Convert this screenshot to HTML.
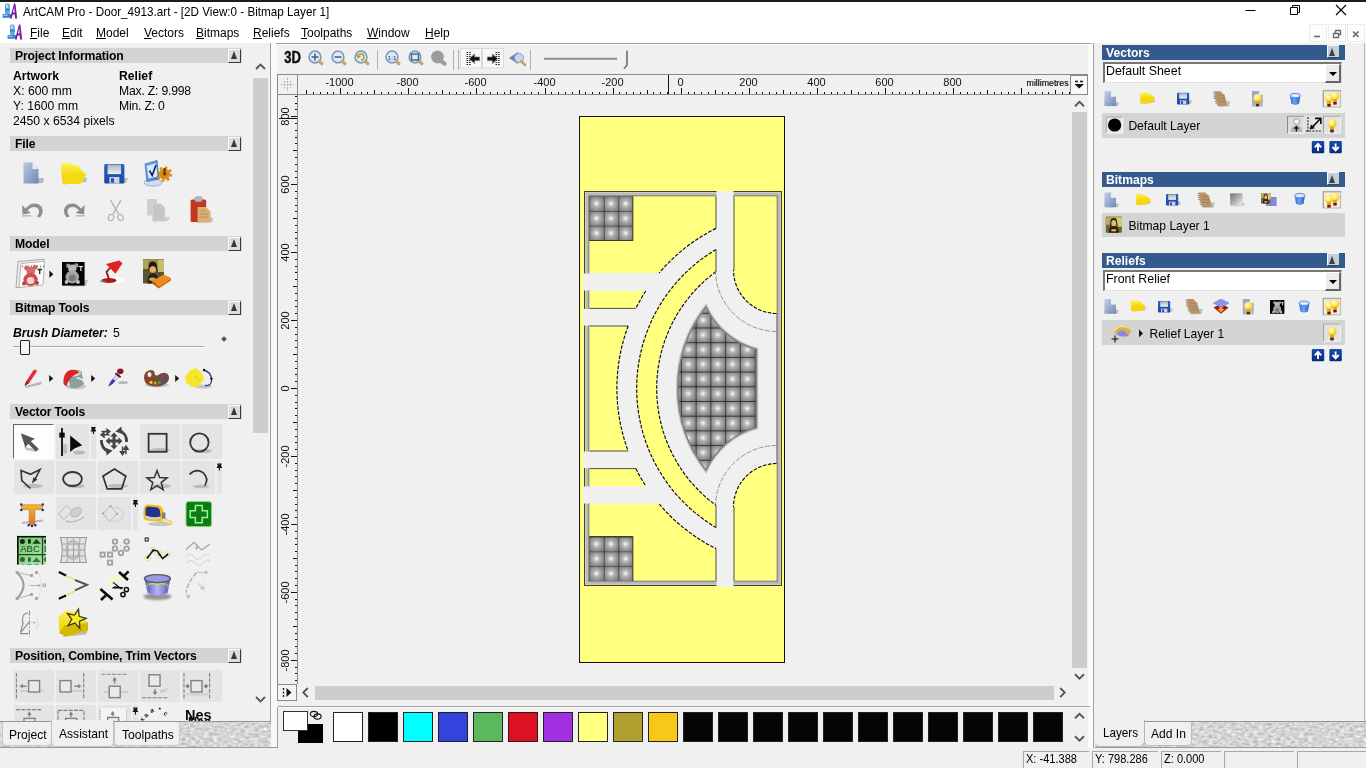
<!DOCTYPE html>
<html><head><meta charset="utf-8"><title>ArtCAM Pro</title>
<style>
*{box-sizing:border-box;margin:0;padding:0}
html,body{width:1366px;height:768px;overflow:hidden;background:#f0f0f0;font-family:"Liberation Sans",sans-serif;font-size:12px;color:#000}
body{position:relative}
.abs{position:absolute}
#topline{position:absolute;left:0;top:0;width:1366px;height:2px;background:#1c1c1c}
#titlebar{position:absolute;left:0;top:2px;width:1366px;height:41px;background:#fff}
.ttl{position:absolute;left:22.5px;top:2px;font-size:12.8px;white-space:nowrap;color:#000;transform:scaleX(0.913);transform-origin:0 50%}
.mi{position:absolute;top:23.5px;font-size:12.7px;white-space:nowrap;color:#000;transform:scaleX(0.945);transform-origin:0 50%}
.mi u{text-decoration:underline;text-underline-offset:1px}
.hdr{position:absolute;left:10px;width:232px;height:15px;background:#d3d3d3;font-weight:bold;font-size:12.2px;line-height:15px;padding-left:5px;white-space:nowrap;letter-spacing:-0.17px}
.hdr .cb{position:absolute;right:1px;top:0.5px;width:13.5px;height:14px;background:#dcdcdc;border-right:1px solid #3a3a3a;border-bottom:1px solid #3a3a3a;border-left:1px solid #fafafa;border-top:1px solid #fafafa}
.hdr .cb:after{content:"";position:absolute;left:2px;top:1.8px;border-left:3.7px solid transparent;border-right:3.7px solid transparent;border-bottom:8px solid #3a3a3a}
.bh{position:absolute;left:1102px;width:243px;height:15px;background:#325a8c;color:#fff;font-weight:bold;font-size:12.7px;line-height:15px;padding-left:4px;white-space:nowrap}
.bh .bt{position:relative;top:0.8px;display:inline-block;transform:scaleX(0.955);transform-origin:0 50%}
.bh .cb{position:absolute;right:6px;top:0.4px;width:12.2px;height:12.8px;background:#c6ceda;border-left:1px solid #f2f6fa;border-top:1px solid #f2f6fa;border-bottom:1px solid #3a4656}
.bh .cb:after{content:"";position:absolute;left:1.6px;top:1.6px;border-left:3.6px solid transparent;border-right:3.6px solid transparent;border-bottom:8px solid #38423e}
.t{position:absolute;white-space:nowrap}
.ic{position:absolute;overflow:visible}
.cell{position:absolute;background:#e4e4e4}
.sw{position:absolute;top:712px;width:30px;height:30px;border:1px solid #222}
.combo{position:absolute;left:1103px;width:239px;height:21px;background:#fff;border-top:2px solid #777;border-left:2px solid #777;border-bottom:1px solid #e0e0e0;border-right:1px solid #e0e0e0;font-size:12.4px;line-height:15px;padding-left:1px}
.combo .db{position:absolute;right:0;top:0;width:16px;height:19px;background:#ececec;border-right:2px solid #666;border-bottom:2px solid #666;border-left:1px solid #fff;border-top:1px solid #fff}
.combo .db:after{content:"";position:absolute;left:3px;top:7px;border-left:4px solid transparent;border-right:4px solid transparent;border-top:4px solid #000}
.lrow{position:absolute;left:1102px;width:243px;height:25px;background:#d4d4d4;font-size:12.1px}
.sx{display:inline-block;transform-origin:0 50%}
.tex{background:#d9d9d9}
.ud{position:absolute;width:12px;height:12px;background:#12409a;border-radius:1px}
.tab{position:absolute;font-size:13px;white-space:nowrap}
.sb{position:absolute;top:751px;height:17px;border-left:1px solid #a8a8a8;border-top:1px solid #a8a8a8;font-size:12px;line-height:15.5px;padding-left:1.5px;white-space:nowrap}

#root{position:absolute;left:0;top:0;width:1366px;height:768px;will-change:transform}

</style></head>
<body>
<div id="root">
<div id="topline"></div>
<div id="titlebar">
<svg class="ic" style="left:2px;top:1px" width="16" height="16" viewBox="0 0 16 16"><rect x="3" y="0.6" width="4.8" height="10.6" rx="1.6" fill="#5ea8e8"/><rect x="4" y="1.6" width="2.2" height="3.4" rx="1" fill="#b8e0f8"/><rect x="3" y="5.6" width="4.8" height="2.2" fill="#3e86d2"/><rect x="0.6" y="11" width="9" height="3.8" fill="#3a82d0"/><rect x="1.6" y="11.8" width="4" height="1.2" fill="#9ccaf0"/><path d="M8 15.6L12 0.4L13.4 0.4L15.2 15.6L13 15.6L12.7 11.6L10.6 11.6L9.8 15.6Z" fill="#7c1c9e"/><path d="M11 9.6L12.2 4L12.6 9.6Z" fill="#fff"/></svg>
<div class="ttl">ArtCAM Pro - Door_4913.art - [2D View:0 - Bitmap Layer 1]</div>
<svg class="ic" style="left:1240px;top:0" width="120" height="22" viewBox="0 0 120 22"><path d="M5.5 8.5H15.5" stroke="#000" stroke-width="1" fill="none"/><path d="M50.5 5.5H57.5V12.5H50.5Z M52.5 5.5V3.5H59.5V10.5H57.5" stroke="#000" stroke-width="1" fill="none"/><path d="M96 3L106 13M106 3L96 13" stroke="#000" stroke-width="1.1" fill="none"/></svg>
<svg class="ic" style="left:7px;top:22px" width="16" height="16" viewBox="0 0 16 16"><rect x="3" y="0.6" width="4.8" height="10.6" rx="1.6" fill="#5ea8e8"/><rect x="4" y="1.6" width="2.2" height="3.4" rx="1" fill="#b8e0f8"/><rect x="3" y="5.6" width="4.8" height="2.2" fill="#3e86d2"/><rect x="0.6" y="11" width="9" height="3.8" fill="#3a82d0"/><rect x="1.6" y="11.8" width="4" height="1.2" fill="#9ccaf0"/><path d="M8 15.6L12 0.4L13.4 0.4L15.2 15.6L13 15.6L12.7 11.6L10.6 11.6L9.8 15.6Z" fill="#7c1c9e"/><path d="M11 9.6L12.2 4L12.6 9.6Z" fill="#fff"/></svg>
<div class="mi" style="left:30px"><u>F</u>ile</div>
<div class="mi" style="left:62px"><u>E</u>dit</div>
<div class="mi" style="left:96px"><u>M</u>odel</div>
<div class="mi" style="left:144px"><u>V</u>ectors</div>
<div class="mi" style="left:196px"><u>B</u>itmaps</div>
<div class="mi" style="left:253px"><u>R</u>eliefs</div>
<div class="mi" style="left:301px"><u>T</u>oolpaths</div>
<div class="mi" style="left:367px"><u>W</u>indow</div>
<div class="mi" style="left:425px"><u>H</u>elp</div>
<div class="abs" style="left:1309px;top:22px;width:18px;height:18px;border:1px solid #ececec;background:#fdfdfd"></div>
<div class="abs" style="left:1328px;top:22px;width:18px;height:18px;border:1px solid #ececec;background:#fdfdfd"></div>
<div class="abs" style="left:1347px;top:22px;width:18px;height:18px;border:1px solid #ececec;background:#fdfdfd"></div>
<svg class="ic" style="left:1309px;top:22px" width="57" height="18" viewBox="0 0 57 18"><path d="M5 12.5H11" stroke="#6a6a6a" stroke-width="1.6"/><path d="M24.5 9.5H29.5V13.5H24.5Z M26.5 9V6.5H31.5V10.5H30" stroke="#6a6a6a" stroke-width="1.3" fill="none"/><path d="M44 7.5L49.5 13M49.5 7.5L44 13" stroke="#6a6a6a" stroke-width="1.7"/></svg>

</div>
<div class="abs" id="leftp" style="left:0;top:43px;width:270px;height:678px;overflow:hidden">
<div class="abs" style="left:0;top:-43px;width:270px;height:768px">
<div class="hdr" style="top:48px"><span style="position:relative;top:0.8px">Project Information</span><span class="cb"></span></div>
<div class="t" style="left:13px;top:68.8px;font-weight:bold;font-size:12.2px">Artwork</div>
<div class="t" style="left:119px;top:68.8px;font-weight:bold;font-size:12.2px">Relief</div>
<div class="t" style="left:13px;top:83.8px;font-size:12.2px">X: 600 mm</div>
<div class="t" style="left:119px;top:83.8px;font-size:12.2px;letter-spacing:-0.2px">Max. Z: 9.998</div>
<div class="t" style="left:13px;top:98.8px;font-size:12.2px">Y: 1600 mm</div>
<div class="t" style="left:119px;top:98.8px;font-size:12.2px;letter-spacing:-0.2px">Min. Z: 0</div>
<div class="t" style="left:13px;top:113.8px;font-size:12.2px">2450 x 6534 pixels</div>
<div class="hdr" style="top:136px"><span style="position:relative;top:0.8px">File</span><span class="cb"></span></div>
<div class="hdr" style="top:236px"><span style="position:relative;top:0.8px">Model</span><span class="cb"></span></div>
<div class="hdr" style="top:300px"><span style="position:relative;top:0.8px">Bitmap Tools</span><span class="cb"></span></div>
<div class="t" style="left:13px;top:325.8px;font-size:12.2px;font-weight:bold;font-style:italic">Brush Diameter:</div>
<div class="t" style="left:113px;top:325.8px;font-size:12.2px">5</div>
<div class="abs" style="left:13px;top:346px;width:191px;height:1px;background:#a8a8a8"></div>
<div class="abs" style="left:13px;top:347px;width:191px;height:1px;background:#fdfdfd"></div>
<div class="abs" style="left:20px;top:340px;width:10px;height:15px;background:#f4f4f4;border:1px solid #222;border-radius:1px"></div>
<div class="abs" style="left:222px;top:337px;width:4px;height:4px;background:#3a5a78;transform:rotate(45deg)"></div>
<div class="hdr" style="top:404px"><span style="position:relative;top:0.8px">Vector Tools</span><span class="cb"></span></div>
<div class="hdr" style="top:648px"><span style="position:relative;top:0.8px">Position, Combine, Trim Vectors</span><span class="cb"></span></div>
<div class="cell" style="left:55.7px;top:424.4px;width:33px;height:34.2px"></div>
<div class="cell" style="left:91px;top:424.4px;width:4.8px;height:34.2px"></div>
<div class="cell" style="left:140px;top:424.4px;width:40px;height:34.2px"></div>
<div class="cell" style="left:181.6px;top:424.4px;width:40px;height:34.2px"></div>
<div class="cell" style="left:13.5px;top:460.6px;width:40.5px;height:33.6px"></div>
<div class="cell" style="left:55.7px;top:460.6px;width:40.5px;height:33.6px"></div>
<div class="cell" style="left:97.5px;top:460.6px;width:40.5px;height:33.6px"></div>
<div class="cell" style="left:140px;top:460.6px;width:40.5px;height:33.6px"></div>
<div class="cell" style="left:181.6px;top:460.6px;width:33px;height:33.6px"></div>
<div class="cell" style="left:217px;top:460.6px;width:4.8px;height:33.6px"></div>
<div class="cell" style="left:56px;top:497.4px;width:39.8px;height:33px"></div>
<div class="cell" style="left:98.2px;top:497.4px;width:33px;height:33px"></div>
<div class="cell" style="left:133px;top:497.4px;width:4.8px;height:33px"></div>
<div class="cell" style="left:14px;top:669.5px;width:40px;height:32.3px"></div>
<div class="cell" style="left:56px;top:669.5px;width:40px;height:32.3px"></div>
<div class="cell" style="left:98px;top:669.5px;width:40px;height:32.3px"></div>
<div class="cell" style="left:140px;top:669.5px;width:40px;height:32.3px"></div>
<div class="cell" style="left:182px;top:669.5px;width:40px;height:32.3px"></div>
<div class="cell" style="left:14px;top:705.2px;width:40px;height:20px"></div>
<div class="cell" style="left:56px;top:705.2px;width:40px;height:20px"></div>
<div class="cell" style="left:98px;top:705.2px;width:33px;height:20px"></div>
<div class="cell" style="left:133px;top:705.2px;width:4.8px;height:20px"></div>
<div class="abs" style="left:13px;top:424px;width:41px;height:35px;background:#fdfdfd;border-top:1px solid #666;border-left:1px solid #666;border-right:1px solid #fff;border-bottom:1px solid #fff"></div>
<svg class="abs" style="left:0;top:0" width="270" height="768" viewBox="0 0 270 768">
<defs>
<filter id="blur1" x="-30%" y="-30%" width="160%" height="160%"><feGaussianBlur stdDeviation="0.9"/></filter>
<filter id="blur05" x="-30%" y="-30%" width="160%" height="160%"><feGaussianBlur stdDeviation="0.5"/></filter>
<linearGradient id="gpage" x1="0" y1="0" x2="1" y2="1"><stop offset="0" stop-color="#b9c9e3"/><stop offset="0.6" stop-color="#8fa3c6"/><stop offset="1" stop-color="#6d84ad"/></linearGradient>
<linearGradient id="gfold" x1="0" y1="0" x2="0" y2="1"><stop offset="0" stop-color="#fff24a"/><stop offset="1" stop-color="#e6c800"/></linearGradient>
<linearGradient id="gsave" x1="0" y1="0" x2="0" y2="1"><stop offset="0" stop-color="#2a62c8"/><stop offset="1" stop-color="#1a48a0"/></linearGradient>
<linearGradient id="glab" x1="0" y1="0" x2="0" y2="1"><stop offset="0" stop-color="#aeb4bc"/><stop offset="1" stop-color="#eef0f2"/></linearGradient>
<linearGradient id="gmon" x1="0" y1="0" x2="1" y2="1"><stop offset="0" stop-color="#7ab6f0"/><stop offset="1" stop-color="#3c78d0"/></linearGradient>
<linearGradient id="gcyl" x1="0" y1="0" x2="1" y2="0"><stop offset="0" stop-color="#5a5ac8"/><stop offset="0.5" stop-color="#b4b4f4"/><stop offset="1" stop-color="#5a5ac8"/></linearGradient>
<linearGradient id="gora" x1="0" y1="0" x2="0" y2="1"><stop offset="0" stop-color="#f6b23c"/><stop offset="1" stop-color="#d97a10"/></linearGradient>
</defs>
<path d="M28 183L43 183L44 178L38 178Z" fill="#8a8a8a" opacity="0.55" filter="url(#blur05)"/>
<path d="M23.5 162.5H32.5L38.5 169V183.5H23.5Z" fill="url(#gpage)"/><path d="M32.5 162.5V169H38.5Z" fill="#e8eef8"/>
<path d="M66 184L86 182L87 178L70 178Z" fill="#8a8a8a" opacity="0.5" filter="url(#blur05)"/>
<path d="M61 166Q61 163.5 63.5 163.5L70 162.8L73 165.2L78 165.5Q80 166 80 168.5L84.5 173.5Q87 174 85.5 176L82 182Q81 183.5 78 183.6L64 184.2Q62.3 184 62.3 182Z" fill="url(#gfold)"/><path d="M62.3 182L66.5 174Q67.5 172.5 70 172.5L84.5 173.5Q86.5 174 85.5 176L82 182Q81 183.5 78 183.6L64 184.2Q62.3 184 62.3 182Z" fill="#f4dc10"/>
<path d="M110 184L126 183L128 178L118 178Z" fill="#8a8a8a" opacity="0.5" filter="url(#blur05)"/>
<rect x="104.2" y="164" width="20.2" height="19.6" rx="1.5" fill="url(#gsave)"/><rect x="107.6" y="164.6" width="13.4" height="9.5" fill="url(#glab)"/><rect x="109.4" y="177" width="10" height="6.6" fill="#c9d2de"/><rect x="111" y="178.2" width="3" height="4.6" fill="#2a55aa"/>
<ellipse cx="153" cy="182.5" rx="9" ry="3.6" fill="#d6dcf0" stroke="#8c9ac8" stroke-width="0.8"/>
<path d="M145 164L157 160.5L159 179L147 181.5Z" fill="url(#gmon)" stroke="#4a6fb8" stroke-width="0.8"/><path d="M147 166L156 163.3L157.5 176.5L148.6 178.6Z" fill="#d8ecff"/><path d="M149.5 170.5L152.2 175.5L156 165" fill="none" stroke="#16226a" stroke-width="1.7"/>
<circle cx="164.5" cy="174" r="5.6" fill="#d98c14"/><circle cx="164.5" cy="174" r="6.6" fill="none" stroke="#d98c14" stroke-width="2.4" stroke-dasharray="2.6 2.6"/><circle cx="164.5" cy="174" r="1.8" fill="#7a4c08"/><rect x="163.6" y="168" width="2" height="6" fill="#5a3a08"/>
<path d="M22 205L22.5 214.5L31 213L27.6 210.5Q32 205 37.5 208Q41 211 37 216.5L40 217.5Q46 209 39 204.5Q31.5 201 25.5 208.5Z" fill="#8e8e8e"/><rect x="22" y="215" width="9" height="1.6" fill="#bcbcbc"/>
<path d="M84.6 205L84.1 214.5L75.6 213L79 210.5Q74.6 205 69.1 208Q65.6 211 69.6 216.5L66.6 217.5Q60.6 209 67.6 204.5Q75.1 201 81.1 208.5Z" fill="#8e8e8e"/><rect x="75.6" y="215" width="9" height="1.6" fill="#bcbcbc"/>
<path d="M110.5 200L118.5 214M121 200L113 214" stroke="#b4b4b4" stroke-width="1.5" fill="none"/><ellipse cx="111" cy="217.5" rx="2.6" ry="3.2" transform="rotate(30 111 217.5)" fill="none" stroke="#b4b4b4" stroke-width="1.2"/><ellipse cx="120.5" cy="217.5" rx="2.6" ry="3.2" transform="rotate(-30 120.5 217.5)" fill="none" stroke="#b4b4b4" stroke-width="1.2"/>
<path d="M152 222L168 221L170 217L160 217Z" fill="#9a9a9a" opacity="0.4" filter="url(#blur05)"/><path d="M147 199H157V215.5H147Z" fill="#cfcfcf"/><path d="M152.5 203.5H161L165 208V221H152.5Z" fill="#c6c6c6" stroke="#dadada" stroke-width="0.6"/>
<path d="M196 223L212 222L213.5 218L203 218Z" fill="#8a8a8a" opacity="0.45" filter="url(#blur05)"/><rect x="190.6" y="199.5" width="15.6" height="22.4" rx="1.5" fill="#c0391f"/><rect x="195" y="196.8" width="7" height="5" rx="1.4" fill="#b9b9c4" stroke="#8c8c98" stroke-width="0.6"/><path d="M197.6 207H206L210.6 211.5V222.5H197.6Z" fill="#dcae78"/><path d="M199.6 211H205M199.6 214H208M199.6 217H208" stroke="#b98a55" stroke-width="0.8"/>
<path d="M18 261.5L44 259.2L42.5 284.5L16 287.6Z" fill="#e9e9e9" stroke="#9a9a9a" stroke-width="0.8"/><path d="M21 263.5L44.6 261.2L43 285L19 287.6Z" fill="#fdfdfd" stroke="#a8a8a8" stroke-width="0.8"/><path d="M22 266.5H44" stroke="#999" stroke-width="2.4" stroke-dasharray="1 2"/>
<circle cx="26.5" cy="268" r="2.3" fill="#d45a5a"/><circle cx="35" cy="267.3" r="2.3" fill="#d45a5a"/><circle cx="30.8" cy="271" r="4.4" fill="#dd6a6a"/><ellipse cx="30.6" cy="279.5" rx="7.2" ry="6.5" fill="#cf4a4a"/><ellipse cx="30.6" cy="280.5" rx="3.8" ry="3.6" fill="#f6d4d4"/><circle cx="24" cy="283.5" r="2" fill="#c43c3c"/><circle cx="37" cy="283" r="2" fill="#c43c3c"/><path d="M37.5 269.5H42M39.7 269.5V274" stroke="#222" stroke-width="1.3"/>
<path d="M49.4 270.59999999999997V277.8L53.4 274.2Z" fill="#111"/>
<path d="M70 287L86 286L88 280L80 280Z" fill="#8a8a8a" opacity="0.45" filter="url(#blur05)"/><rect x="62" y="262" width="22.6" height="23.6" fill="#050505"/>
<circle cx="68.3" cy="265.8" r="2.2" fill="#9c9c9c"/><circle cx="76.3" cy="265.5" r="2.2" fill="#9c9c9c"/><circle cx="72.3" cy="268.8" r="4.2" fill="#b8b8b8"/><ellipse cx="72.3" cy="277" rx="6.8" ry="6.4" fill="#a4a4a4"/><ellipse cx="72.3" cy="278" rx="3.4" ry="3.3" fill="#7a7a7a"/><circle cx="66.5" cy="282" r="1.9" fill="#c4c4c4"/><circle cx="78" cy="282" r="1.9" fill="#c4c4c4"/><path d="M78.8 266.5H83M80.9 266.5V271" stroke="#eee" stroke-width="1.2"/>
<ellipse cx="113" cy="280" rx="11" ry="3.4" fill="#fff" opacity="0.9"/><ellipse cx="109" cy="280.5" rx="7.5" ry="2.6" fill="#b01818"/><ellipse cx="102.5" cy="281.3" rx="3" ry="1.2" fill="#777" opacity="0.5"/><path d="M109 279L106.5 272L111 267" fill="none" stroke="#8a1010" stroke-width="1.8"/><path d="M106 264L119.5 260.6L122.5 263.5L115.5 273.8Z" fill="#e02222"/><path d="M115.5 273.8L122.5 263.5L121 270Z" fill="#f8e8d0"/>
<rect x="143" y="259" width="21" height="24.5" fill="#5e5630"/><rect x="143" y="259" width="21" height="10" fill="#9a9054"/><rect x="158" y="260" width="6" height="12" fill="#c8be70"/><rect x="143" y="260" width="5" height="9" fill="#aea25e"/><ellipse cx="152.8" cy="268.5" rx="3.4" ry="4.3" fill="#e2b070"/><path d="M147.4 283.5Q147 273.5 152.8 273Q159 273.5 158.8 283.5Z" fill="#2e2414"/><path d="M148.8 266Q149 261.6 153 261.6Q157 262 156.8 266.5L157.6 272L155.8 268Q153 264 149.6 268L148.2 272Z" fill="#231808"/><ellipse cx="152.5" cy="279.3" rx="3.4" ry="1.7" fill="#d4a268"/>
<path d="M152 281L164 274.6L171 278L159 286Z" fill="#f08a1a"/><path d="M152 281L159 286V288.6L152 283.4Z" fill="#b85e0a"/><path d="M159 286L171 278V280.4L159 288.6Z" fill="#d8720e"/>
<path d="M25 386L42 381.6L41 384.6L26 388Z" fill="#8a8a8a" opacity="0.55" filter="url(#blur05)"/><path d="M24.5 386L26.3 381L34 369.5L37 371.3L29.2 383Z" fill="#e02a3a"/><path d="M24.5 386L26.3 381L29.2 383Z" fill="#7a2a2a"/><path d="M35 369.3L37.4 370.8" stroke="#f48a94" stroke-width="1"/>
<path d="M49.2 374.9V382.1L53.2 378.5Z" fill="#111"/>
<ellipse cx="76" cy="386.5" rx="10" ry="3" fill="#8a8a8a" opacity="0.4" filter="url(#blur05)"/><path d="M67.5 374.5L81.6 372.5L84 384Q78 389.5 70.4 387.5Z" fill="#8aa09a"/><ellipse cx="74.5" cy="373.8" rx="7.2" ry="3.2" transform="rotate(-8 74.5 373.8)" fill="#d8e0dc" stroke="#6e807a" stroke-width="0.7"/><path d="M63.5 384Q62.5 373 70 370Q77 368.5 79.5 373Q74 374 70.5 378.5Q68 381 66.5 386.5Z" fill="#d62626"/><path d="M76.5 378Q82 378 83.5 382" fill="none" stroke="#e8eeec" stroke-width="1.4"/>
<path d="M91.2 374.9V382.1L95.2 378.5Z" fill="#111"/>
<ellipse cx="123" cy="382.5" rx="5" ry="1.6" fill="#8a8a8a" opacity="0.55" filter="url(#blur05)"/><path d="M108.6 386.2L110.8 381.6L117.5 373.4L119.8 375.2L113 383.5Z" fill="#dfe4f2" stroke="#6a6a8a" stroke-width="0.6"/><path d="M108.6 386.2L110.8 381.6L113 383.5Z" fill="#2a3cc0"/><path d="M110.6 381.8L113 379L115.2 380.8L112.8 383.6Z" fill="#2a3cc0"/><path d="M115.4 373.2L120.6 377.2" stroke="#4a1a22" stroke-width="1.8"/><ellipse cx="120.3" cy="371.2" rx="3.2" ry="2.8" fill="#8a1a2a"/>
<ellipse cx="157" cy="385" rx="12" ry="2.6" fill="#8a8a8a" opacity="0.4" filter="url(#blur05)"/><path d="M144 378.5Q143.5 371 150.5 370Q154.5 370 154.5 373Q154.5 376 157.5 375.5Q162 371.5 167 373.5Q170.5 376.5 168 381.5Q163 387.5 153 386.3Q145 385.5 144 378.5Z" fill="#7a4a34"/><ellipse cx="149.5" cy="374.5" rx="2" ry="2.6" fill="#efefef"/><circle cx="147.6" cy="380" r="1.5" fill="#d42020"/><circle cx="151" cy="382.3" r="1.5" fill="#f2e020"/><circle cx="155.2" cy="383" r="1.5" fill="#e8a020"/><circle cx="159.2" cy="382.6" r="1.5" fill="#28b040"/><circle cx="162.8" cy="380.8" r="1.5" fill="#2a50e0"/><circle cx="165.5" cy="378" r="1.5" fill="#2a50e0"/>
<path d="M175.2 374.9V382.1L179.2 378.5Z" fill="#111"/>
<ellipse cx="203" cy="386.6" rx="9" ry="2" fill="#8a8a8a" opacity="0.4" filter="url(#blur05)"/><path d="M203 370Q211.5 371.5 211.5 380.5Q211.5 386 205 385.5" fill="none" stroke="#2a3a9a" stroke-width="1.3"/><circle cx="204" cy="370" r="1.2" fill="#111"/><circle cx="211.5" cy="378.6" r="1.2" fill="#111"/><path d="M185 376.5L190.5 370L196 368L202.5 373.5L204 380L198 386.5L191.5 387L186 382.5Z" fill="#f6e62a"/><path d="M195 376L199.5 380.5" stroke="#d8c010" stroke-width="1"/>
<path d="M24 447L40 449.5L36 452L26 450Z" fill="#8a8a8a" opacity="0.5" filter="url(#blur05)"/><path d="M20.8 433.2L34.8 438.8L30.8 441.2L38.6 448.8L35.8 451.4L28.2 443.8L25.4 447.8Z" fill="#555"/>
<ellipse cx="79" cy="452.5" rx="6" ry="2" fill="#8a8a8a" opacity="0.5" filter="url(#blur05)"/><ellipse cx="65" cy="449" rx="2.4" ry="5" fill="#8a8a8a" opacity="0.4" filter="url(#blur05)"/><path d="M62 428V456" stroke="#0a0a0a" stroke-width="1.8"/><rect x="59.3" y="432.6" width="5.4" height="5" fill="#0a0a0a"/><path d="M70.2 435.5V452L74.4 448.6L82.2 445.3Z" fill="#0a0a0a"/>
<path d="M91.2 427.5H95.60000000000001M92.10000000000001 428.1V430.5H94.7V428.1M90.80000000000001 430.9H96.0M93.4 431.0V434.0" stroke="#111" stroke-width="1.1" fill="#111"/>
<path d="M114 432.6L117.8 436.6H115.5V439.5H118.4V437.2L122.4 441L118.4 444.8V442.5H115.5V445.4H117.8L114 449.4L110.2 445.4H112.5V442.5H109.6V444.8L105.6 441L109.6 437.2V439.5H112.5V436.6H110.2Z" fill="#444"/>
<path d="M119 430.2Q127 433.5 126.6 442" fill="none" stroke="#444" stroke-width="2.8"/><path d="M115.4 431.4L121.4 426.6L122.2 434Z" fill="#444"/><path d="M109 451.8Q101 448.5 101.4 440" fill="none" stroke="#444" stroke-width="2.8"/><path d="M112.6 450.6L106.6 455.4L105.8 448Z" fill="#444"/>
<path d="M101.5 431.5H108.5M110 431.5L107 429.3V433.7ZM109.5 434.8H102.5M101 434.8L104 432.6V437Z" stroke="#444" stroke-width="1.4" fill="#444"/>
<path d="M122.5 446.5V453M122.5 454.8L120.4 451.6H124.6ZM126 454.3V447.8M126 446L123.9 449.2H128.1Z" stroke="#444" stroke-width="1.4" fill="#444"/>
<ellipse cx="160" cy="450" rx="10" ry="2" fill="#8a8a8a" opacity="0.45" filter="url(#blur05)"/><rect x="148.6" y="433.8" width="18" height="18" fill="none" stroke="#333" stroke-width="1.8"/>
<ellipse cx="203" cy="451" rx="9" ry="2" fill="#8a8a8a" opacity="0.45" filter="url(#blur05)"/><circle cx="199.4" cy="442.5" r="9.2" fill="none" stroke="#333" stroke-width="1.8"/>
<ellipse cx="33" cy="486" rx="10" ry="2.2" fill="#8a8a8a" opacity="0.45" filter="url(#blur05)"/><path d="M30.5 488.5L21.8 480.6L21 470.4L30.5 474.3L40 469.6L34.6 480" fill="none" stroke="#333" stroke-width="1.6"/><path d="M32 483.6L33.4 477.2L37.4 479.4Z" fill="#333"/>
<ellipse cx="76" cy="486" rx="9" ry="2" fill="#8a8a8a" opacity="0.45" filter="url(#blur05)"/><ellipse cx="72.5" cy="479" rx="9.4" ry="7" fill="none" stroke="#333" stroke-width="1.8"/>
<ellipse cx="118" cy="486" rx="10" ry="2" fill="#8a8a8a" opacity="0.45" filter="url(#blur05)"/><path d="M114.4 469L125.8 476.2L121.6 488.8H107.2L103 476.2Z" fill="none" stroke="#333" stroke-width="1.7"/>
<ellipse cx="162" cy="486" rx="9" ry="2" fill="#8a8a8a" opacity="0.45" filter="url(#blur05)"/><path d="M157.0 470.6L159.6 477.6L167.1 477.9L161.2 482.6L163.2 489.8L157.0 485.6L150.8 489.8L152.8 482.6L146.9 477.9L154.4 477.6Z" fill="none" stroke="#333" stroke-width="1.5"/>
<ellipse cx="201" cy="486.5" rx="8" ry="1.8" fill="#8a8a8a" opacity="0.45" filter="url(#blur05)"/><path d="M189.6 474.4Q196 468 203 472.6Q209.4 478.5 204.8 485.6" fill="none" stroke="#333" stroke-width="1.7"/>
<path d="M217.20000000000002 464H221.6M218.1 464.6V467H220.70000000000002V464.6M216.8 467.4H222.0M219.4 467.5V470.5" stroke="#111" stroke-width="1.1" fill="#111"/>
<path d="M22 522L43 519.6V521.6L22 524Z" fill="#8a8a8a" opacity="0.55" filter="url(#blur05)"/><path d="M21.5 504.8H42.5V509.6H34.8V524.8H29.2V509.6H21.5Z" fill="url(#gora)" stroke="#a86008" stroke-width="0.5"/>
<rect x="20.2" y="503.4" width="2.2" height="2.2" fill="#1a2a9a"/>
<rect x="41.6" y="503.4" width="2.2" height="2.2" fill="#1a2a9a"/>
<rect x="20.2" y="508.9" width="2.2" height="2.2" fill="#1a2a9a"/>
<rect x="41.6" y="508.9" width="2.2" height="2.2" fill="#1a2a9a"/>
<rect x="27.5" y="524.1" width="2.2" height="2.2" fill="#1a2a9a"/>
<rect x="34.3" y="524.1" width="2.2" height="2.2" fill="#1a2a9a"/>
<rect x="30.9" y="524.9" width="2.2" height="2.2" fill="#1a2a9a"/>
<path d="M58.5 514L66.5 505.5L72 511L64 519.5Z" fill="none" stroke="#b8b8b8" stroke-width="1"/><ellipse cx="76" cy="512" rx="6" ry="4" transform="rotate(-35 76 512)" fill="#d0d0d0" stroke="#b8b8b8"/><path d="M66 521Q74 524 84 517" stroke="#b8b8b8" stroke-width="1.4" fill="none"/>
<path d="M103 513.5L110.5 506L117 514L109.5 521.5Z" fill="none" stroke="#b8b8b8" stroke-width="1"/><circle cx="103" cy="513.5" r="1" fill="#999"/><circle cx="110.5" cy="506" r="1" fill="#999"/><circle cx="117" cy="514" r="1" fill="#999"/><path d="M112 508Q124 506 123 516Q121 523 110 521" fill="none" stroke="#d2d2d2" stroke-width="1.2"/>
<path d="M133.20000000000002 500.5H137.6M134.1 501.1V503.5H136.70000000000002V501.1M132.8 503.9H138.0M135.4 504.0V507.0" stroke="#111" stroke-width="1.1" fill="#111"/>
<ellipse cx="160" cy="524" rx="12" ry="2" fill="#8a8a8a" opacity="0.4" filter="url(#blur05)"/><path d="M143.5 509.5Q144 504.5 149 504.6L158 505.2Q162.6 506 163.4 511L164.4 518Q163 522 158 521.8L146.6 520.6Q143.6 519.6 143.5 516Z" fill="#f0c018"/><path d="M145.5 509Q146 506.6 148.6 506.6L156.4 507.2Q159.6 507.8 160 511L160.6 516.4Q152 518.6 145.6 515.6Z" fill="#28308a"/><path d="M145.6 515.6Q152 518.6 160.6 516.4L160.8 518.6Q153 521 145.8 518.4Z" fill="#c8ccd8"/><path d="M163 517.5L172 521.6L171 524.8L160 521.4Z" fill="#f4e29a" stroke="#c8a838" stroke-width="0.5"/><rect x="162" y="512.5" width="3.4" height="6" fill="#7a7a8a"/>
<rect x="186" y="501.6" width="25.6" height="25" rx="2.6" fill="#0c7c10" stroke="#86d486" stroke-width="1"/><path d="M195.4 505.6H202.2V510.8H207.4V517.6H202.2V522.8H195.4V517.6H190.2V510.8H195.4Z" fill="none" stroke="#9ff09f" stroke-width="1.5"/>
<defs><linearGradient id="gabc" x1="0" y1="0" x2="1" y2="1"><stop offset="0" stop-color="#6cc46c"/><stop offset="1" stop-color="#b4e2b4"/></linearGradient><clipPath id="cabc"><rect x="17" y="535.8" width="29" height="29"/></clipPath></defs>
<g clip-path="url(#cabc)"><rect x="17" y="535.8" width="29" height="29" fill="url(#gabc)"/><path d="M17.8 564.8V536.6H46" fill="none" stroke="#061006" stroke-width="1.7"/><path d="M42.5 537V565M18 554.6H46" stroke="#1c4a1c" stroke-width="1.3"/>
<circle cx="22.4" cy="541.4" r="2.5" fill="#0c2c0c"/><rect x="28" y="539.2" width="2.8" height="4.4" fill="#0c2c0c"/><path d="M32.4 543.7L36.4 539L40.8 543.7Z" fill="#184018"/><text x="20.2" y="551.8" font-size="9" font-family="Liberation Sans" fill="#144a14" textLength="19.6" lengthAdjust="spacingAndGlyphs">ABC</text>
<circle cx="22.4" cy="559.6" r="2.5" fill="#2c6a2c"/><rect x="28" y="557.4" width="2.8" height="4.4" fill="#2c6a2c"/><path d="M32.4 561.9L36.4 557.2L40.8 561.9Z" fill="#3a7a3a"/><text x="20.2" y="570" font-size="9" font-family="Liberation Sans" fill="#2c6a2c" textLength="19.6" lengthAdjust="spacingAndGlyphs">ABC</text>
<circle cx="46.4" cy="541.4" r="2.5" fill="#184018"/><text x="44" y="551.8" font-size="9" font-family="Liberation Sans" fill="#144a14">B</text><circle cx="46.4" cy="559.6" r="2.5" fill="#3a7a3a"/></g>
<path d="M60.5 537.5H86.5Q83 550 86.5 562.5H60.5Q64 550 60.5 537.5Z" fill="#e2e2e2" stroke="#9a9a9a" stroke-width="1.1"/><path d="M62.4 544H84.6M63 550H84M62.4 556H84.6M67 537.5Q69 550 67 562.5M73.5 537.5V562.5M80 537.5Q78 550 80 562.5" stroke="#9a9a9a" stroke-width="0.9" fill="none"/><ellipse cx="73" cy="550" rx="6.5" ry="9" fill="none" stroke="#b4b4b4" stroke-width="2.2"/>
<rect x="100.5" y="552.5" width="4.2" height="4.2" fill="none" stroke="#a0a0a0" stroke-width="1.8"/>
<rect x="107.9" y="552.5" width="4.2" height="4.2" fill="none" stroke="#a0a0a0" stroke-width="1.8"/>
<rect x="107.9" y="560.5" width="4.2" height="4.2" fill="none" stroke="#a0a0a0" stroke-width="1.8"/>
<circle cx="115" cy="541.6" r="2.3" fill="none" stroke="#a0a0a0" stroke-width="1.8"/>
<circle cx="126.6" cy="541.6" r="2.3" fill="none" stroke="#a0a0a0" stroke-width="1.8"/>
<circle cx="115" cy="548.6" r="2.3" fill="none" stroke="#a0a0a0" stroke-width="1.8"/>
<circle cx="126.6" cy="548.6" r="2.3" fill="none" stroke="#a0a0a0" stroke-width="1.8"/>
<circle cx="121" cy="553" r="2.3" fill="none" stroke="#a0a0a0" stroke-width="1.8"/>
<circle cx="120.8" cy="545.6" r="0.7" fill="#999"/>
<rect x="145.2" y="538" width="3" height="3" fill="#fff" stroke="#111" stroke-width="1"/>
<circle cx="147.6" cy="557.6" r="2.9" fill="#fbfbc8" stroke="#c8c890" stroke-width="0.6"/>
<circle cx="153.2" cy="550.2" r="2.9" fill="#fbfbc8" stroke="#c8c890" stroke-width="0.6"/>
<circle cx="159.6" cy="554.6" r="2.9" fill="#fbfbc8" stroke="#c8c890" stroke-width="0.6"/>
<circle cx="167.4" cy="554.6" r="2.9" fill="#fbfbc8" stroke="#c8c890" stroke-width="0.6"/>
<path d="M147.6 557.6L153.2 550.2L157 550.6L162.6 558.6L167.4 554.6" fill="none" stroke="#111" stroke-width="1.5"/>
<path d="M146.2 557.6H149.0M147.6 556.2V559.0" stroke="#111" stroke-width="0.8"/>
<path d="M151.79999999999998 550.2H154.6M153.2 548.8000000000001V551.6" stroke="#111" stroke-width="0.8"/>
<path d="M158.2 554.6H161.0M159.6 553.2V556.0" stroke="#111" stroke-width="0.8"/>
<path d="M166.0 554.6H168.8M167.4 553.2V556.0" stroke="#111" stroke-width="0.8"/>
<path d="M186 549.5L194 542.4L201.6 550L210 544" fill="none" stroke="#a8a8a8" stroke-width="1.3"/><path d="M196.6 544V548.4M195 547L196.6 549.6L198.2 547" stroke="#a8a8a8" stroke-width="0.9" fill="none"/><path d="M186 557Q190 552 194 557T202 557T210 556M187 563Q191 558 195 563T203 563T211 562" fill="none" stroke="#cfcfcf" stroke-width="1.2" stroke-dasharray="2 1.2"/>
<path d="M17 572.5Q30 585 17 598.5" fill="none" stroke="#a0a0a0" stroke-width="2.2"/><path d="M18 572.5L31 575.5M18 598.5L31 594.5M30 585.5H40" stroke="#aaa" stroke-width="0.9"/><path d="M38 583.8L41 585.5L38 587.2Z" fill="#aaa"/>
<rect x="15.6" y="571.1" width="2.8" height="2.8" fill="#a0a0a0"/>
<rect x="15.6" y="597.1" width="2.8" height="2.8" fill="#a0a0a0"/>
<rect x="30.1" y="574.1" width="2.8" height="2.8" fill="#a0a0a0"/>
<rect x="30.1" y="593.1" width="2.8" height="2.8" fill="#a0a0a0"/>
<rect x="35.1" y="571.1" width="2.8" height="2.8" fill="#a0a0a0"/>
<rect x="35.1" y="597.1" width="2.8" height="2.8" fill="#a0a0a0"/>
<rect x="43" y="584" width="2.6" height="2.6" fill="none" stroke="#999" stroke-width="0.8"/><path d="M38 572Q45 585 38 599" fill="none" stroke="#e0e0e0" stroke-width="1"/>
<path d="M66 575.5L76 580.5M66 595.5L76 590.5" stroke="#f8f8a0" stroke-width="2"/><path d="M66 575.5L76 580.5M66 595.5L76 590.5" stroke="#555" stroke-width="0.6" stroke-dasharray="1 1.4"/><path d="M58.8 572L66 575.5M58.8 598.8L66 595.5" stroke="#0a0a0a" stroke-width="2.2"/><path d="M75 580L87 584.9L75 590.4" fill="none" stroke="#555" stroke-width="2"/>
<path d="M108 583L121 576" stroke="#fbfbb4" stroke-width="3.4"/><path d="M119 572L128 580" stroke="#0a0a0a" stroke-width="2.6"/><path d="M128.6 571.4L123.4 576.4" stroke="#0a0a0a" stroke-width="2.6"/><path d="M100.4 589L112.6 599.6" stroke="#0a0a0a" stroke-width="2.6"/><path d="M106.6 594.6L101 600" stroke="#0a0a0a" stroke-width="2.6"/><path d="M113 582.6L121.4 589M112.6 587.8H123" stroke="#0a0a0a" stroke-width="1.4"/><path d="M113 582.6L117 585.6L112.6 587.8" fill="#fff" stroke="#0a0a0a" stroke-width="0.9"/><circle cx="126.4" cy="589.6" r="2.1" fill="#fff" stroke="#0a0a0a" stroke-width="1.5"/><circle cx="123" cy="594.6" r="2.1" fill="#fff" stroke="#0a0a0a" stroke-width="1.5"/>
<ellipse cx="157.5" cy="596.6" rx="14" ry="3.4" fill="#6a6a6a" opacity="0.7" filter="url(#blur1)"/><path d="M144.4 579L147.6 593Q157.4 598 167.6 593L170.4 579Z" fill="url(#gcyl)"/><ellipse cx="157.4" cy="578.6" rx="13" ry="4" fill="#9a9ae8" stroke="#5a5a6a" stroke-width="1.4"/><path d="M146.4 586Q152 582 157.4 585Q163 582 168.6 586" fill="none" stroke="#dada50" stroke-width="1.2"/><path d="M148 580.6L149.6 592M166.8 580.6L165.4 592" stroke="#6a7a6a" stroke-width="0.9"/>
<path d="M196.6 572.6Q188 582 186 592" fill="none" stroke="#b4b4b4" stroke-width="1.6" stroke-dasharray="5 1.6"/><path d="M197 572.4H207M205 571L208 572.4L205 573.8ZM197.6 582.6L203 588.6M202.8 586L203.6 589.2L200.6 588.6ZM186 592L188.6 598M186.6 596L188.8 598.6L189.6 595.4Z" stroke="#c0c0c0" stroke-width="1" fill="#c0c0c0"/><path d="M200 573Q212 586 198 598" fill="none" stroke="#e4e4e4" stroke-width="1"/>
<path d="M29.4 610.5V636.5" stroke="#8a8a8a" stroke-width="1" stroke-dasharray="5 1.5 1.5 1.5"/><path d="M28 613Q22 613 22.6 621Q23.6 625 21.4 628L20.6 633.6H28.4M21.4 631.6L28.6 622.6" fill="none" stroke="#8a8a8a" stroke-width="1.1"/><path d="M31 622.6H35.6M33.6 621.4L35.8 622.6L33.6 623.8" stroke="#c4c4c4" stroke-width="0.9" fill="none"/><path d="M36 618Q41 623 36 629" fill="none" stroke="#dcdcdc" stroke-width="1.1"/>
<path d="M62 637L86 634.6L88 629L70 630Z" fill="#8a8a8a" opacity="0.5" filter="url(#blur05)"/><path d="M58.5 616.5L66 610.6L76 612L88 622.6V630.6L66 636.6L59.4 633Z" fill="url(#gfold)"/><path d="M59.4 633L64.4 625Q76 625.6 88 622.6V630.6L66 636.6Z" fill="#d6b800"/>
<path d="M78.5 609.1L79.2 616.3L86.2 618.3L79.5 621.2L79.8 628.5L75.0 623.1L68.1 625.5L71.8 619.3L67.4 613.5L74.4 615.1Z" fill="#f8ec20" stroke="#3a3a2a" stroke-width="1.3"/>
<path d="M16.4 673V699" stroke="#808080" stroke-width="1.1" stroke-dasharray="4 1.3"/><path d="M26.4 686.2H21" stroke="#808080" stroke-width="1.4"/><path d="M19.4 686.2L22.8 683.8000000000001V688.6Z" fill="#808080"/><rect x="20" y="690" width="24" height="2" fill="#cfcfcf"/><rect x="28.6" y="680.6" width="11" height="11.4" fill="#e9e9e9" stroke="#808080" stroke-width="1.4"/>
<path d="M83.7 673V699" stroke="#808080" stroke-width="1.1" stroke-dasharray="4 1.3"/><path d="M74.4 686.2H79.8" stroke="#808080" stroke-width="1.4"/><path d="M81.39999999999999 686.2L78.0 683.8000000000001V688.6Z" fill="#808080"/><rect x="62" y="690" width="20" height="2" fill="#cfcfcf"/><rect x="60" y="680.6" width="11" height="11.4" fill="#e9e9e9" stroke="#808080" stroke-width="1.4"/>
<path d="M101.4 674.2H127.4" stroke="#808080" stroke-width="1.1" stroke-dasharray="4 1.3"/><path d="M114.6 683.6V678.6" stroke="#808080" stroke-width="1.4"/><path d="M114.6 677.0L112.19999999999999 680.4H117.0Z" fill="#808080"/><rect x="104" y="691" width="24" height="2" fill="#cfcfcf"/><rect x="109.2" y="686.2" width="11" height="11.4" fill="#e9e9e9" stroke="#808080" stroke-width="1.4"/>
<path d="M142 697.8H168" stroke="#808080" stroke-width="1.1" stroke-dasharray="4 1.3"/><path d="M155 689V693.6" stroke="#808080" stroke-width="1.4"/><path d="M155 695.2L152.6 691.8000000000001H157.4Z" fill="#808080"/><path d="M160 690L168 688L166 692L160 693Z" fill="#cfcfcf"/><rect x="149" y="674.8" width="11" height="11.4" fill="#e9e9e9" stroke="#808080" stroke-width="1.4"/>
<path d="M184 673V699M209.6 673V699" stroke="#808080" stroke-width="1.1" stroke-dasharray="4 1.3"/><rect x="186" y="693.4" width="24" height="2" fill="#cfcfcf"/><rect x="191" y="680.6" width="11" height="11.4" fill="#e9e9e9" stroke="#808080" stroke-width="1.4"/><path d="M187.6 683.8L189.8 686.2L187.6 688.6L185.4 686.2ZM206 683.8L208.2 686.2L206 688.6L203.8 686.2Z" fill="#808080"/>
<path d="M16 709.6H42" stroke="#808080" stroke-width="1.1" stroke-dasharray="4 1.3"/><path d="M29.4 717V713" stroke="#808080" stroke-width="1.4"/><path d="M29.4 711.4L27.0 714.8H31.799999999999997Z" fill="#808080"/><rect x="24" y="718.4" width="11" height="11.4" fill="#e9e9e9" stroke="#808080" stroke-width="1.4"/>
<path d="M58 710.4H84V722M58 710.4V722" stroke="#808080" stroke-width="1.1" stroke-dasharray="4 1.3" fill="none"/><path d="M71 717V713" stroke="#808080" stroke-width="1.4"/><path d="M71 711.4L68.6 714.8H73.4Z" fill="#808080"/><rect x="65.6" y="718.4" width="11" height="11.4" fill="#e9e9e9" stroke="#808080" stroke-width="1.4"/>
<path d="M100 710.4V722M126 710.4V722" stroke="#9a9a9a" stroke-width="1" stroke-dasharray="1.4 1.6" fill="none"/><rect x="101" y="708" width="25" height="14" fill="#f4f4f4"/><path d="M112.6 716V712.6" stroke="#808080" stroke-width="1.4"/><path d="M112.6 711.0L110.19999999999999 714.4H115.0Z" fill="#808080"/><rect x="107.6" y="717.4" width="11" height="11.4" fill="#e9e9e9" stroke="#808080" stroke-width="1.4"/>
<path d="M133.20000000000002 708H137.6M134.1 708.6V711H136.70000000000002V708.6M132.8 711.4H138.0M135.4 711.5V714.5" stroke="#111" stroke-width="1.1" fill="#111"/>
<text transform="translate(146 718) rotate(-42)" font-size="6.4" font-family="Liberation Sans" font-weight="bold" fill="#111">a</text><text transform="translate(151 713) rotate(-20)" font-size="6.4" font-family="Liberation Sans" font-weight="bold" fill="#111">a</text><text transform="translate(158 711.6) rotate(10)" font-size="6.4" font-family="Liberation Sans" font-weight="bold" fill="#111">*</text><text transform="translate(163 714) rotate(40)" font-size="6.4" font-family="Liberation Sans" font-weight="bold" fill="#111">c</text><text transform="translate(143 722) rotate(-60)" font-size="6.4" font-family="Liberation Sans" font-weight="bold" fill="#111">x</text>
<text x="185" y="720" font-size="14.4" font-family="Liberation Sans" font-weight="bold" fill="#0a0a0a" textLength="26.6" lengthAdjust="spacingAndGlyphs">Nes</text><text x="188" y="727" font-size="14" font-family="Liberation Sans" font-weight="bold" fill="#0a0a0a" textLength="23" lengthAdjust="spacingAndGlyphs">Nes</text>
</svg>
</div></div>
<div class="abs" style="left:253px;top:78px;width:15px;height:355px;background:#cdcdcd"></div>
<svg class="abs" style="left:250px;top:55px" width="20" height="660" viewBox="250 55 20 660"><path d="M256 69L260.5 64.5L265 69" fill="none" stroke="#555" stroke-width="1.8"/><path d="M256 697L260.5 701.5L265 697" fill="none" stroke="#555" stroke-width="1.8"/></svg>
<svg class="abs" style="left:0;top:721px" width="271" height="26" viewBox="0 0 271 26"><defs><filter id="nz" x="0" y="0" width="100%" height="100%" color-interpolation-filters="sRGB"><feTurbulence type="fractalNoise" baseFrequency="0.22 0.4" numOctaves="3" seed="7" result="n"/><feColorMatrix type="matrix" values="0 0 0 0 0.835  0 0 0 0 0.835  0 0 0 0 0.835  0 0 0 0 1" in="n" result="base"/><feColorMatrix type="matrix" values="0.38 0 0 0 0.645  0.38 0 0 0 0.645  0.38 0 0 0 0.645  0 0 0 0 1" in="n"/></filter></defs><rect width="271" height="26" filter="url(#nz)"/></svg>
<div class="abs" style="left:0;top:747px;width:277px;height:1px;background:#9a9a9a"></div>
<div class="abs" style="left:2px;top:722px;width:50px;height:24px;background:#f0f0f0;border-radius:0 0 5px 5px;border:1px solid #c8c8c8;border-top:none"></div>
<div class="abs" style="left:114px;top:722px;width:66px;height:24px;background:#f0f0f0;border-radius:0 0 5px 5px;border:1px solid #c8c8c8;border-top:none"></div>
<div class="abs" style="left:51px;top:720px;width:63px;height:27px;background:#f0f0f0;border-radius:0 0 5px 5px;border:1px solid #c0c0c0;border-top:none"></div>
<div class="abs" style="left:0;top:721px;width:51px;height:1px;background:#969696"></div><div class="abs" style="left:114px;top:721px;width:157px;height:1px;background:#969696"></div>
<div class="tab" style="left:9px;top:727px"><span class="sx" style="transform:scaleX(0.93)">Project</span></div>
<div class="tab" style="left:59px;top:726px"><span class="sx" style="transform:scaleX(0.93)">Assistant</span></div>
<div class="tab" style="left:121.5px;top:727px"><span class="sx" style="transform:scaleX(0.93)">Toolpaths</span></div>
<div class="abs" style="left:270px;top:43px;width:1px;height:678px;background:#a0a0a0"></div>
<div class="abs" style="left:271px;top:44px;width:6px;height:703px;background:#f9f9f9"></div>
<div class="abs" style="left:277px;top:707px;width:1px;height:41px;background:#a0a0a0"></div>
<div class="abs" style="left:276px;top:43px;width:815px;height:1px;background:#a0a0a0"></div>
<div class="abs" style="left:276px;top:44px;width:815px;height:1px;background:#fdfdfd"></div>
<div class="abs" style="left:1093px;top:43px;width:1px;height:705px;background:#a0a0a0"></div>
<div class="abs" style="left:1088px;top:45px;width:5px;height:703px;background:#fbfbfb"></div>
<svg class="abs" style="left:277px;top:44px" width="420" height="30" viewBox="277 44 420 30">
<text x="284.3" y="63.4" font-size="16.2" font-weight="bold" font-family="Liberation Sans" fill="#111" textLength="16.6" lengthAdjust="spacingAndGlyphs" stroke="#111" stroke-width="0.5">3D</text>
<circle cx="315" cy="57" r="5.9" fill="#dfeaf4" stroke="#7f9cbc" stroke-width="1.6"/><path d="M311.5 57H318.5M315 53.5V60.5" stroke="#3a5f8a" stroke-width="1.5"/><path d="M320 62L321.8 63.6" stroke="#c8a468" stroke-width="3.4" stroke-linecap="round"/>
<circle cx="338" cy="57" r="5.9" fill="#dfeaf4" stroke="#7f9cbc" stroke-width="1.6"/><path d="M334.5 57H341.5" stroke="#3a5f8a" stroke-width="1.5"/><path d="M343 62L344.8 63.6" stroke="#c8a468" stroke-width="3.4" stroke-linecap="round"/>
<circle cx="361" cy="57" r="5.9" fill="#dfeaf4" stroke="#7f9cbc" stroke-width="1.6"/><path d="M358 57a3 3 0 1 1 3 3M357 54.5l1 3 2.5-1.5" stroke="#b59a2a" stroke-width="1.4" fill="none"/><path d="M366 62L367.8 63.6" stroke="#c8a468" stroke-width="3.4" stroke-linecap="round"/>
<path d="M377.5 50V70" stroke="#b0b0b0" stroke-width="1"/>
<circle cx="392" cy="57" r="5.9" fill="#dfeaf4" stroke="#7f9cbc" stroke-width="1.6"/><text x="392" y="59.5" font-size="6" text-anchor="middle" font-family="Liberation Sans" font-weight="bold" fill="#3a6ea8">1:1</text><path d="M397 62L398.8 63.6" stroke="#c8a468" stroke-width="3.4" stroke-linecap="round"/>
<circle cx="415" cy="57" r="5.9" fill="#dfeaf4" stroke="#7f9cbc" stroke-width="1.6"/><rect x="411.5" y="54" width="7" height="6" fill="none" stroke="#3a5f8a" stroke-width="1.4"/><path d="M420 62L421.8 63.6" stroke="#c8a468" stroke-width="3.4" stroke-linecap="round"/>
<circle cx="437.5" cy="57" r="6.4" fill="#9c9c9c"/><path d="M441 61L444.6 63.6" stroke="#9c9c9c" stroke-width="4.2" stroke-linecap="round"/>
<path d="M453.5 50V70M458.5 50V70" stroke="#b0b0b0" stroke-width="1"/>
<rect x="460.5" y="48.5" width="21" height="19.5" fill="#f8f8f8" stroke="#dadada"/><rect x="482.5" y="48.5" width="21" height="19.5" fill="#f8f8f8" stroke="#dadada"/>
<path d="M466.5 52.5H471.5M466.5 54.5H471.5M466.5 56.5H471.5M466.5 58.5H471.5M466.5 60.5H471.5M466.5 62.5H471.5M466.5 64.5H471.5" stroke="#222" stroke-width="1" stroke-dasharray="1.6 1"/><path d="M469.4 58.8L474.6 54V57H479.6V60.6H474.6V63.6Z" fill="#111" stroke="#777" stroke-width="0.7"/>
<path d="M495.5 52.5H500.5M495.5 54.5H500.5M495.5 56.5H500.5M495.5 58.5H500.5M495.5 60.5H500.5M495.5 62.5H500.5M495.5 64.5H500.5" stroke="#222" stroke-width="1" stroke-dasharray="1.6 1"/><path d="M497.6 58.8L492.4 54V57H487.4V60.6H492.4V63.6Z" fill="#111" stroke="#777" stroke-width="0.7"/>
<path d="M509 58L518 52V64Z" fill="#6d7fc0"/><circle cx="519" cy="58" r="4.5" fill="#cfd8ea" stroke="#8a9ac0" stroke-width="1"/><path d="M521 61L525 65" stroke="#c8a060" stroke-width="2.5" stroke-linecap="round"/>
<path d="M530.5 50V70" stroke="#b0b0b0" stroke-width="1"/>
<path d="M544 58.8H617" stroke="#8c8c8c" stroke-width="2"/>
<path d="M627 50.6V65L624 68.6" stroke="#7c7c7c" stroke-width="1.8" fill="none"/>
</svg>
<svg class="abs" style="left:277px;top:74px" width="811" height="21" viewBox="277 74 811 21">
<rect x="277" y="74" width="811" height="21" fill="#f0f0f0"/>
<path d="M277 74.5H1088M277.5 74V95M297.5 74V95" stroke="#8a8a8a" stroke-width="1" fill="none"/>
<path d="M277 94.5H1071" stroke="#8a8a8a" stroke-width="1" fill="none"/>
<path d="M281 84.5H294M287.5 78V91M284.5 81V88M290.5 81V88" stroke="#b5b5b5" stroke-width="1" stroke-dasharray="2 1" fill="none"/>
<path d="M306.5 90V94M313.5 92V94M320.5 92V94M327.5 92V94M333.5 92V94M340.5 88V94M347.5 92V94M354.5 92V94M361.5 92V94M367.5 92V94M374.5 90V94M381.5 92V94M388.5 92V94M395.5 92V94M401.5 92V94M408.5 88V94M415.5 92V94M422.5 92V94M429.5 92V94M436.5 92V94M442.5 90V94M449.5 92V94M456.5 92V94M463.5 92V94M470.5 92V94M476.5 88V94M483.5 92V94M490.5 92V94M497.5 92V94M504.5 92V94M510.5 90V94M517.5 92V94M524.5 92V94M531.5 92V94M538.5 92V94M545.5 88V94M551.5 92V94M558.5 92V94M565.5 92V94M572.5 92V94M579.5 90V94M585.5 92V94M592.5 92V94M599.5 92V94M606.5 92V94M613.5 88V94M619.5 92V94M626.5 92V94M633.5 92V94M640.5 92V94M647.5 90V94M653.5 92V94M660.5 92V94M667.5 92V94M674.5 92V94M681.5 88V94M688.5 92V94M694.5 92V94M701.5 92V94M708.5 92V94M715.5 90V94M722.5 92V94M728.5 92V94M735.5 92V94M742.5 92V94M749.5 88V94M756.5 92V94M762.5 92V94M769.5 92V94M776.5 92V94M783.5 90V94M790.5 92V94M796.5 92V94M803.5 92V94M810.5 92V94M817.5 88V94M824.5 92V94M831.5 92V94M837.5 92V94M844.5 92V94M851.5 90V94M858.5 92V94M865.5 92V94M871.5 92V94M878.5 92V94M885.5 88V94M892.5 92V94M899.5 92V94M905.5 92V94M912.5 92V94M919.5 90V94M926.5 92V94M933.5 92V94M939.5 92V94M946.5 92V94M953.5 88V94M960.5 92V94M967.5 92V94M974.5 92V94M980.5 92V94M987.5 90V94M994.5 92V94M1001.5 92V94M1008.5 92V94M1014.5 92V94M1021.5 88V94M1028.5 92V94M1035.5 92V94M1042.5 92V94M1048.5 92V94M1055.5 90V94M1062.5 92V94M1069.5 92V94" stroke="#111" stroke-width="1" fill="none"/>
<path d="M668.5 75V94" stroke="#111" stroke-width="1"/>
<text x="339.5" y="86" font-size="11" text-anchor="middle" font-family="Liberation Sans" fill="#111">-1000</text>
<text x="407.5" y="86" font-size="11" text-anchor="middle" font-family="Liberation Sans" fill="#111">-800</text>
<text x="475.5" y="86" font-size="11" text-anchor="middle" font-family="Liberation Sans" fill="#111">-600</text>
<text x="544.5" y="86" font-size="11" text-anchor="middle" font-family="Liberation Sans" fill="#111">-400</text>
<text x="612.5" y="86" font-size="11" text-anchor="middle" font-family="Liberation Sans" fill="#111">-200</text>
<text x="748.5" y="86" font-size="11" text-anchor="middle" font-family="Liberation Sans" fill="#111">200</text>
<text x="816.5" y="86" font-size="11" text-anchor="middle" font-family="Liberation Sans" fill="#111">400</text>
<text x="884.5" y="86" font-size="11" text-anchor="middle" font-family="Liberation Sans" fill="#111">600</text>
<text x="952.5" y="86" font-size="11" text-anchor="middle" font-family="Liberation Sans" fill="#111">800</text>
<text x="680.5" y="86" font-size="11" text-anchor="middle" font-family="Liberation Sans" fill="#111">0</text>
<text x="1068.6" y="86" font-size="8.8" text-anchor="end" font-family="Liberation Sans" fill="#000" stroke="#000" stroke-width="0.15">millimetres</text>
<rect x="1070.5" y="75.5" width="17" height="19" fill="#f8f8f8" stroke="#8a8a8a"/>
<path d="M1075 81.5H1078M1080 81.5H1083" stroke="#111" stroke-width="1.4"/><path d="M1074.5 84H1084L1079.2 88.5Z" fill="#111"/>
</svg>
<svg class="abs" style="left:277px;top:95px" width="21" height="589" viewBox="277 95 21 589">
<path d="M277.5 95V700M297.5 95V684" stroke="#8a8a8a" stroke-width="1" fill="none"/>
<path d="M297.5 95V684" stroke="#8a8a8a" stroke-width="1" fill="none"/>
<path d="M295 680.5H297M295 673.5H297M295 667.5H297M291 660.5H297M295 653.5H297M295 646.5H297M295 639.5H297M295 633.5H297M293 626.5H297M295 619.5H297M295 612.5H297M295 605.5H297M295 599.5H297M291 592.5H297M295 585.5H297M295 578.5H297M295 571.5H297M295 565.5H297M293 558.5H297M295 551.5H297M295 544.5H297M295 538.5H297M295 531.5H297M291 524.5H297M295 517.5H297M295 510.5H297M295 504.5H297M295 497.5H297M293 490.5H297M295 483.5H297M295 476.5H297M295 470.5H297M295 463.5H297M291 456.5H297M295 449.5H297M295 442.5H297M295 436.5H297M295 429.5H297M293 422.5H297M295 415.5H297M295 408.5H297M295 402.5H297M295 395.5H297M291 388.5H297M295 381.5H297M295 374.5H297M295 368.5H297M295 361.5H297M293 354.5H297M295 347.5H297M295 340.5H297M295 334.5H297M295 327.5H297M291 320.5H297M295 313.5H297M295 306.5H297M295 300.5H297M295 293.5H297M293 286.5H297M295 279.5H297M295 272.5H297M295 266.5H297M295 259.5H297M291 252.5H297M295 245.5H297M295 238.5H297M295 232.5H297M295 225.5H297M293 218.5H297M295 211.5H297M295 205.5H297M295 198.5H297M295 191.5H297M291 184.5H297M295 177.5H297M295 171.5H297M295 164.5H297M295 157.5H297M293 150.5H297M295 143.5H297M295 137.5H297M295 130.5H297M295 123.5H297M291 116.5H297M295 109.5H297M295 103.5H297M295 96.5H297" stroke="#111" stroke-width="1" fill="none"/>
<text transform="translate(289 116.5) rotate(-90)" font-size="11" text-anchor="middle" font-family="Liberation Sans" fill="#111">800</text>
<text transform="translate(289 184.5) rotate(-90)" font-size="11" text-anchor="middle" font-family="Liberation Sans" fill="#111">600</text>
<text transform="translate(289 252.5) rotate(-90)" font-size="11" text-anchor="middle" font-family="Liberation Sans" fill="#111">400</text>
<text transform="translate(289 320.5) rotate(-90)" font-size="11" text-anchor="middle" font-family="Liberation Sans" fill="#111">200</text>
<text transform="translate(289 388.5) rotate(-90)" font-size="11" text-anchor="middle" font-family="Liberation Sans" fill="#111">0</text>
<text transform="translate(289 456.5) rotate(-90)" font-size="11" text-anchor="middle" font-family="Liberation Sans" fill="#111">-200</text>
<text transform="translate(289 524.5) rotate(-90)" font-size="11" text-anchor="middle" font-family="Liberation Sans" fill="#111">-400</text>
<text transform="translate(289 592.5) rotate(-90)" font-size="11" text-anchor="middle" font-family="Liberation Sans" fill="#111">-600</text>
<text transform="translate(289 660.5) rotate(-90)" font-size="11" text-anchor="middle" font-family="Liberation Sans" fill="#111">-800</text>
<path d="M279 118.5H297M291 116.5H297" stroke="#111" stroke-width="1" fill="none"/>
</svg>
<svg class="abs" style="left:560px;top:100px" width="250" height="580" viewBox="560 100 250 580">
<defs>
<radialGradient id="cg" cx="50%" cy="50%" r="70%"><stop offset="0" stop-color="#fcfcfc"/><stop offset="0.1" stop-color="#e6e6e6"/><stop offset="0.32" stop-color="#b2b2b2"/><stop offset="0.68" stop-color="#8e8e8e"/><stop offset="1" stop-color="#707070"/></radialGradient>
<pattern id="pc" x="589.2" y="196.2" width="14.55" height="14.75" patternUnits="userSpaceOnUse"><rect width="14.55" height="14.75" fill="url(#cg)"/><path d="M0 0H14.55M0 0V14.75" stroke="#222" stroke-width="1.1" fill="none"/></pattern>
<pattern id="pc2" x="589.2" y="536.6" width="14.55" height="14.75" patternUnits="userSpaceOnUse"><rect width="14.55" height="14.75" fill="url(#cg)"/><path d="M0 0H14.55M0 0V14.75" stroke="#222" stroke-width="1.1" fill="none"/></pattern>
<pattern id="pl" x="680.9" y="327.5" width="14.75" height="14.7" patternUnits="userSpaceOnUse"><rect width="14.75" height="14.7" fill="url(#cg)"/><path d="M0 0H14.75M0 0V14.7" stroke="#1a1a1a" stroke-width="1.3" fill="none"/></pattern>

</defs>
<rect x="579.5" y="116.5" width="205" height="546" fill="#ffff80" stroke="#111" stroke-width="1"/>
<rect x="584.5" y="191.5" width="197" height="394" fill="#cdcbc6" stroke="#33331a" stroke-width="0.9"/>
<rect x="587" y="194" width="192" height="389" fill="none" stroke="#bdbbb6" stroke-width="2"/>
<rect x="589" y="196" width="188" height="385" fill="#f0f0f0" stroke="#555" stroke-width="1"/>
<path d="M589.5 196.5H716V228.38A178.9 178.9 0 0 0 659.18 273.00H589.5Z" fill="#ffff80"/>
<path d="M589.5 580.5H716V548.62A178.9 178.9 0 0 1 659.18 504.00H589.5Z" fill="#ffff80"/>
<path d="M589.5 291H645.80A178.9 178.9 0 0 0 635.83 308.40H589.5Z" fill="#ffff80"/>
<path d="M589.5 486.0H645.80A178.9 178.9 0 0 1 635.83 468.60H589.5Z" fill="#ffff80"/>
<path d="M589.5 326H628.17A178.9 178.9 0 0 0 628.17 451.00H589.5Z" fill="#ffff80"/>
<path d="M716 249.54A161.4 161.4 0 0 0 716.00 527.46V505.36A144.8 144.8 0 0 1 716.00 271.64Z" fill="#ffff80"/>
<path d="M589.5 308.4H635.8M589.5 326H628.2M589.5 468.6H635.8M589.5 451.0H628.2M716 196.5V228.4M716 580.5V548.6M716 249.5V271.6M716 527.5V505.4" fill="none" stroke="#222" stroke-width="0.8"/>
<path d="M716 228.38A178.9 178.9 0 0 0 659.18 273.00M645.80 291A178.9 178.9 0 0 0 635.83 308.40M628.17 326A178.9 178.9 0 0 0 628.17 451.00M635.83 468.6A178.9 178.9 0 0 0 645.80 486.00M659.18 504.0A178.9 178.9 0 0 0 716.00 548.62M716 249.54A161.4 161.4 0 0 0 716.00 527.46M716 271.64A144.8 144.8 0 0 0 716.00 505.36" fill="none" stroke="#0a0a0a" stroke-width="1.15" stroke-dasharray="3.6 1.5"/>
<rect x="583" y="273.5" width="7" height="17.0" fill="#f0f0f0"/>
<rect x="583" y="308.9" width="7" height="16.6" fill="#f0f0f0"/>
<rect x="583" y="486.5" width="7" height="17.0" fill="#f0f0f0"/>
<rect x="583" y="451.5" width="7" height="16.6" fill="#f0f0f0"/>
<rect x="716.5" y="191" width="17" height="6" fill="#f0f0f0"/>
<rect x="716.5" y="580" width="17" height="7" fill="#f0f0f0"/>
<path d="M734 196.5H776.5V313.5A43.5 43.5 0 0 1 733.50 270.00Z" fill="#ffff80"/><path d="M734 580.5H776.5V463.5A43.5 43.5 0 0 0 733.50 507.00Z" fill="#ffff80"/>
<path d="M734 196.5V270.0M734 580.5V507.0" fill="none" stroke="#222" stroke-width="0.8"/>
<path d="M776.5 313.5A43.5 43.5 0 0 1 733.50 270.00M776.5 463.5A43.5 43.5 0 0 0 733.50 507.00" fill="none" stroke="#0a0a0a" stroke-width="1.15" stroke-dasharray="3.6 1.5"/>
<path d="M776.5 331.5A61.5 61.5 0 0 1 715.50 273.00M776.5 445.5A61.5 61.5 0 0 0 715.50 504.00" fill="none" stroke="#555" stroke-width="0.6" stroke-dasharray="5 1.5"/>
<path d="M705.96 306.73A77.6 77.6 0 0 0 756.40 349.35V427.65A77.6 77.6 0 0 0 705.96 470.27A132.8 132.8 0 0 1 705.96 306.73Z" fill="#c6c6c6" stroke="#c6c6c6" stroke-width="3.8" stroke-linejoin="miter"/>
<path d="M705.96 306.73A77.6 77.6 0 0 0 756.40 349.35V427.65A77.6 77.6 0 0 0 705.96 470.27A132.8 132.8 0 0 1 705.96 306.73Z" fill="url(#pl)" stroke="#808080" stroke-width="1.5" stroke-linejoin="miter"/>
<rect x="589.2" y="196.2" width="43.6" height="44.3" fill="url(#pc)"/>
<rect x="589.2" y="536.6" width="43.6" height="44.3" fill="url(#pc2)"/>
<path d="M589.2 240.5H632.8V196.2" fill="none" stroke="#3c3c3c" stroke-width="1.1"/>
<path d="M589.2 536.6H632.8V580.9" fill="none" stroke="#3c3c3c" stroke-width="1.1"/>
</svg>
<div class="abs" style="left:1071px;top:95px;width:17px;height:589px;background:#f0f0f0"></div>
<div class="abs" style="left:1072px;top:112px;width:15px;height:556px;background:#cdcdcd"></div>
<svg class="abs" style="left:1071px;top:95px" width="17" height="589" viewBox="1071 95 17 589"><path d="M1075.0 106.25L1079.5 101.75L1084.0 106.25" fill="none" stroke="#555" stroke-width="1.8"/><path d="M1075.0 674.25L1079.5 678.75L1084.0 674.25" fill="none" stroke="#555" stroke-width="1.8"/></svg>
<div class="abs" style="left:277px;top:684px;width:811px;height:17px;background:#f0f0f0"></div>
<div class="abs" style="left:315px;top:686px;width:739px;height:14px;background:#cdcdcd"></div>
<div class="abs" style="left:277px;top:684px;width:20px;height:17px;background:#f4f4f4;border:1px solid #8a8a8a"></div>
<svg class="abs" style="left:277px;top:684px" width="811" height="17" viewBox="277 684 811 17"><path d="M283.5 688V697" stroke="#111" stroke-width="1.3" stroke-dasharray="2 1.5"/><path d="M286.5 688V697L291.5 692.5Z" fill="#111"/><path d="M307.75 688.0L303.25 692.5L307.75 697.0" fill="none" stroke="#555" stroke-width="1.8"/><path d="M1060.25 688.0L1064.75 692.5L1060.25 697.0" fill="none" stroke="#555" stroke-width="1.8"/></svg>
<div class="abs" style="left:278px;top:706px;width:812px;height:1px;background:#a0a0a0"></div>
<div class="abs" style="left:278px;top:707px;width:812px;height:1px;background:#fbfbfb"></div>
<div class="abs" style="left:298px;top:724px;width:24.5px;height:19px;background:#000"></div>
<div class="abs" style="left:283px;top:711px;width:24.5px;height:19.5px;background:#fff;border:1px solid #333"></div>
<svg class="abs" style="left:309px;top:710px" width="14" height="12" viewBox="0 0 14 12"><ellipse cx="5" cy="4" rx="3.6" ry="2.6" fill="none" stroke="#111" stroke-width="1.1"/><ellipse cx="8.5" cy="6.5" rx="3.6" ry="2.6" fill="none" stroke="#111" stroke-width="1.1"/></svg>
<div class="sw" style="left:333px;background:#ffffff"></div>
<div class="sw" style="left:368px;background:#000000"></div>
<div class="sw" style="left:403px;background:#00ffff"></div>
<div class="sw" style="left:438px;background:#3344dd"></div>
<div class="sw" style="left:473px;background:#5cb85c"></div>
<div class="sw" style="left:508px;background:#dd1122"></div>
<div class="sw" style="left:543px;background:#a030e0"></div>
<div class="sw" style="left:578px;background:#ffff80"></div>
<div class="sw" style="left:613px;background:#b0a030"></div>
<div class="sw" style="left:648px;background:#f8c818"></div>
<div class="sw" style="left:683px;background:#050505"></div>
<div class="sw" style="left:718px;background:#050505"></div>
<div class="sw" style="left:753px;background:#050505"></div>
<div class="sw" style="left:788px;background:#050505"></div>
<div class="sw" style="left:823px;background:#050505"></div>
<div class="sw" style="left:858px;background:#050505"></div>
<div class="sw" style="left:893px;background:#050505"></div>
<div class="sw" style="left:928px;background:#050505"></div>
<div class="sw" style="left:963px;background:#050505"></div>
<div class="sw" style="left:998px;background:#050505"></div>
<div class="sw" style="left:1033px;background:#050505"></div>
<svg class="abs" style="left:1070px;top:708px" width="20" height="40" viewBox="1070 708 20 40"><path d="M1075.0 718.25L1079.5 713.75L1084.0 718.25" fill="none" stroke="#555" stroke-width="1.8"/><path d="M1075.0 736.25L1079.5 740.75L1084.0 736.25" fill="none" stroke="#555" stroke-width="1.8"/></svg>
<div class="bh" style="top:45px"><span class="bt">Vectors</span><span class="cb"></span></div>
<div class="combo" style="top:62px">Default Sheet<span class="db"></span></div>
<div class="lrow" style="top:112.5px"><span class="t" style="left:26.4px;top:6.7px">Default Layer</span></div>
<div class="bh" style="top:172px"><span class="bt">Bitmaps</span><span class="cb"></span></div>
<div class="lrow" style="top:213px;height:24px"><span class="t" style="left:26.4px;top:6.2px">Bitmap Layer 1</span></div>
<div class="bh" style="top:253px"><span class="bt">Reliefs</span><span class="cb"></span></div>
<div class="combo" style="top:270px">Front Relief<span class="db"></span></div>
<div class="lrow" style="top:320.3px"><span class="t" style="left:47.6px;top:6.8px">Relief Layer 1</span></div>
<svg class="abs" style="left:1098px;top:84px" width="268" height="290" viewBox="1098 84 268 290">
<defs>
<filter id="rb05" x="-30%" y="-30%" width="160%" height="160%"><feGaussianBlur stdDeviation="0.5"/></filter>
<linearGradient id="rgpage" x1="0" y1="0" x2="1" y2="1"><stop offset="0" stop-color="#c4d2ea"/><stop offset="0.6" stop-color="#93a6c8"/><stop offset="1" stop-color="#6f86ae"/></linearGradient>
<linearGradient id="rgpage2" x1="0" y1="0" x2="1" y2="1"><stop offset="0" stop-color="#8fa6cc"/><stop offset="1" stop-color="#b8bcc4"/></linearGradient>
<linearGradient id="rgfold" x1="0" y1="0" x2="0" y2="1"><stop offset="0" stop-color="#fff24a"/><stop offset="1" stop-color="#e6c800"/></linearGradient>
<linearGradient id="rgsave" x1="0" y1="0" x2="0" y2="1"><stop offset="0" stop-color="#2a62c8"/><stop offset="1" stop-color="#1a48a0"/></linearGradient>
<linearGradient id="rglab" x1="0" y1="0" x2="0" y2="1"><stop offset="0" stop-color="#aeb4bc"/><stop offset="1" stop-color="#eef0f2"/></linearGradient>
<linearGradient id="rgbuck" x1="0" y1="0" x2="1" y2="0"><stop offset="0" stop-color="#2a6ae0"/><stop offset="0.45" stop-color="#6aa2f4"/><stop offset="1" stop-color="#2458c8"/></linearGradient>
<radialGradient id="rgbulb" cx="40%" cy="35%" r="70%"><stop offset="0" stop-color="#fffbe0"/><stop offset="0.5" stop-color="#ffe860"/><stop offset="1" stop-color="#f0b810"/></radialGradient>
<linearGradient id="rgud" x1="0" y1="0" x2="0" y2="1"><stop offset="0" stop-color="#1a4cae"/><stop offset="1" stop-color="#0a2a7a"/></linearGradient>
<linearGradient id="rggray" x1="0" y1="0" x2="1" y2="1"><stop offset="0" stop-color="#6e6e6e"/><stop offset="1" stop-color="#f4f4f4"/></linearGradient>
</defs>
<path d="M1108.4 106.3L1117.9 105.89999999999999L1118.9 102.3L1112.4 102.3Z" fill="#8a8a8a" opacity="0.5" filter="url(#rb05)"/><path d="M1104.4 91.3H1111.0L1116.0 96.7V106.1H1104.4Z" fill="url(#rgpage)"/><path d="M1111.0 91.3V96.7H1116.0Z" fill="#eef2fa"/>
<path d="M1143.6 103.8L1154.6 102.2L1155.6 99.8L1145.6 100.2Z" fill="#8a8a8a" opacity="0.45" filter="url(#rb05)"/><path d="M1140.1999999999998 94.2Q1140.1999999999998 92.60000000000001 1142.0 92.60000000000001L1145.6 92.2L1147.1999999999998 93.60000000000001L1150.6 93.8Q1151.6 94.2 1151.6 95.60000000000001L1154.1999999999998 97.2Q1155.1999999999998 97.8 1154.3999999999999 99.0L1152.1999999999998 102.2Q1151.6 103.0 1150.1999999999998 103.0L1141.6 103.4Q1140.3999999999999 103.2 1140.3999999999999 102.0Z" fill="url(#rgfold)"/><path d="M1140.3999999999999 102.0L1143.0 97.8Q1143.6 96.8 1145.1999999999998 96.8L1154.1999999999998 97.2Q1155.1999999999998 97.8 1154.3999999999999 99.0L1152.1999999999998 102.2Q1151.6 103.0 1150.1999999999998 103.0L1141.6 103.4Q1140.3999999999999 103.2 1140.3999999999999 102.0Z" fill="#f2d80c"/>
<path d="M1181 104.8L1191 103.8L1192 100.39999999999999L1185 100.8Z" fill="#8a8a8a" opacity="0.45" filter="url(#rb05)"/><rect x="1177" y="92.8" width="12.2" height="11.6" rx="1" fill="url(#rgsave)"/><rect x="1179.2" y="93.2" width="7.8" height="5.4" fill="url(#rglab)"/><rect x="1180" y="100.39999999999999" width="6.4" height="4" fill="#c9d2de"/><rect x="1181" y="101.2" width="2" height="2.8" fill="#2a55aa"/>
<path d="M1218.4 106.89999999999999L1229.0 106.3L1230.0 101.3L1222.4 101.3Z" fill="#8a8a8a" opacity="0.5" filter="url(#rb05)"/><path d="M1214.4 91.3H1221.0L1222.4 93.5L1224.4 94.3L1226.0 100.3L1227.4 105.89999999999999H1217.4L1216.0 100.3L1214.8000000000002 99.3Z" fill="#b8946a"/><path d="M1214.4 92.3H1213.2M1214.4 94.3H1213.2M1214.6000000000001 96.3H1213.4M1214.8000000000002 98.3H1213.6000000000001M1216.2 101.3H1215.0M1216.8000000000002 103.3H1215.6000000000001" stroke="#9a7850" stroke-width="1"/><path d="M1217.4 95.3H1223.0M1218.0 98.3H1224.4M1219.0 101.3H1225.4" stroke="#a4825a" stroke-width="0.9"/>
<path d="M1252 91H1259L1263 95V106.4H1252Z" fill="url(#rgpage2)"/><path d="M1259 91V95H1263Z" fill="#f4f6fa"/><circle cx="1257.6" cy="98.2" r="4.085" fill="url(#rgbulb)"/><path d="M1255.51 101.24000000000001L1256.08 104.28H1259.12L1259.6899999999998 101.24000000000001Z" fill="#e0a010"/><rect x="1256.08" y="103.9" width="3.04" height="2.4699999999999998" fill="#3a1a0a"/><rect x="1256.08" y="104.66" width="3.04" height="0.76" fill="#c02010"/>
<path d="M1290 95.60000000000001L1291.4 103.80000000000001Q1295.2 106.0 1299 103.80000000000001L1300.4 95.60000000000001Z" fill="url(#rgbuck)"/><ellipse cx="1295.2" cy="95.60000000000001" rx="5.2" ry="2.2" fill="#c4daf8" stroke="#4a80d8" stroke-width="0.8"/><ellipse cx="1295.2" cy="95.80000000000001" rx="3" ry="1" fill="#eef4fc"/>
<rect x="1323" y="90.4" width="17.6" height="16.6" fill="#f4ecd6" stroke="#b6b6b6" stroke-width="1"/><path d="M1323.5 107.0V90.9H1340.6" fill="none" stroke="#a4a4a4" stroke-width="1"/><circle cx="1329" cy="98.0" r="4.3" fill="url(#rgbulb)"/><path d="M1326.8 101.2L1327.4 104.4H1330.6L1331.2 101.2Z" fill="#e0a010"/><rect x="1327.4" y="104.0" width="3.2" height="2.6" fill="#3a1a0a"/><rect x="1327.4" y="104.8" width="3.2" height="0.8" fill="#c02010"/><circle cx="1335" cy="96.0" r="4.3" fill="url(#rgbulb)"/><path d="M1332.8 99.2L1333.4 102.4H1336.6L1337.2 99.2Z" fill="#e0a010"/><rect x="1333.4" y="102.0" width="3.2" height="2.6" fill="#3a1a0a"/><rect x="1333.4" y="102.8" width="3.2" height="0.8" fill="#c02010"/>
<rect x="1106.2" y="117" width="16.4" height="16" fill="#e6e6e6" stroke="#f8f8f8" stroke-width="1"/><path d="M1106.2 133V117H1122.6" fill="none" stroke="#9a9a9a" stroke-width="1"/><circle cx="1114.6" cy="125" r="6.6" fill="#000"/>
<rect x="1287.5" y="116.2" width="16.6" height="17" fill="#dcdcdc" stroke="#f4f4f4"/><path d="M1287.5 133.2V116.2H1304" fill="none" stroke="#8a8a8a"/><circle cx="1296.6" cy="121.6" r="3" fill="#f4f4f4" stroke="#9a9a9a"/><path d="M1291 132Q1291 125.6 1296.6 125.6Q1302 125.6 1302 132Z" fill="#b4b4b4"/><path d="M1296.4 131.6V127M1294.4 128.8L1296.4 126.4L1298.4 128.8" stroke="#111" stroke-width="1.3" fill="none"/>
<rect x="1305.6" y="116.2" width="16.6" height="17" fill="#e4e4e4"/><path d="M1308 117V133M1306 131H1322" stroke="#111" stroke-width="1" stroke-dasharray="2 1.2"/><path d="M1309.6 129.4L1311 124.4L1312.4 125.8L1319.6 118.6L1320.6 119.6L1313.6 127L1315 128.2Z" fill="#0a0a0a"/><path d="M1315 118.4H1320.8V124" stroke="#0a0a0a" stroke-width="1.6" fill="none"/>
<rect x="1323.4" y="116.2" width="17" height="17" fill="#e2e2e2" stroke="#f6f6f6"/><path d="M1323.4 133.2V116.2H1340.4" fill="none" stroke="#9a9a9a"/><circle cx="1332" cy="123.4" r="4.515" fill="url(#rgbulb)"/><path d="M1329.69 126.76L1330.32 130.12H1333.68L1334.31 126.76Z" fill="#e0a010"/><rect x="1330.32" y="129.70000000000002" width="3.3600000000000003" height="2.7300000000000004" fill="#3a1a0a"/><rect x="1330.32" y="130.54" width="3.3600000000000003" height="0.8400000000000001" fill="#c02010"/>
<rect x="1311.8" y="141" width="12.4" height="12.2" rx="1.2" fill="url(#rgud)"/><path d="M1318.0 151V144.4M1314.8 147.4L1318.0 144L1321.2 147.4" fill="none" stroke="#fff" stroke-width="1.9"/><rect x="1329.3999999999999" y="141" width="12.4" height="12.2" rx="1.2" fill="url(#rgud)"/><path d="M1335.6 143.4V150M1332.3999999999999 147L1335.6 150.4L1338.8 147" fill="none" stroke="#fff" stroke-width="1.9"/>
<path d="M1108.4 207.4L1117.9 207.0L1118.9 203.4L1112.4 203.4Z" fill="#8a8a8a" opacity="0.5" filter="url(#rb05)"/><path d="M1104.4 192.4H1111.0L1116.0 197.8V207.20000000000002H1104.4Z" fill="url(#rgpage)"/><path d="M1111.0 192.4V197.8H1116.0Z" fill="#eef2fa"/>
<path d="M1139.4 205.2L1150.4 203.6L1151.4 201.2L1141.4 201.6Z" fill="#8a8a8a" opacity="0.45" filter="url(#rb05)"/><path d="M1136.0 195.6Q1136.0 194.0 1137.8000000000002 194.0L1141.4 193.6L1143.0 195.0L1146.4 195.2Q1147.4 195.6 1147.4 197.0L1150.0 198.6Q1151.0 199.2 1150.2 200.4L1148.0 203.6Q1147.4 204.4 1146.0 204.4L1137.4 204.79999999999998Q1136.2 204.6 1136.2 203.4Z" fill="url(#rgfold)"/><path d="M1136.2 203.4L1138.8000000000002 199.2Q1139.4 198.2 1141.0 198.2L1150.0 198.6Q1151.0 199.2 1150.2 200.4L1148.0 203.6Q1147.4 204.4 1146.0 204.4L1137.4 204.79999999999998Q1136.2 204.6 1136.2 203.4Z" fill="#f2d80c"/>
<path d="M1170 206L1180 205L1181 201.6L1174 202Z" fill="#8a8a8a" opacity="0.45" filter="url(#rb05)"/><rect x="1166" y="194" width="12.2" height="11.6" rx="1" fill="url(#rgsave)"/><rect x="1168.2" y="194.4" width="7.8" height="5.4" fill="url(#rglab)"/><rect x="1169" y="201.6" width="6.4" height="4" fill="#c9d2de"/><rect x="1170" y="202.4" width="2" height="2.8" fill="#2a55aa"/>
<path d="M1203 208.0L1213.6 207.4L1214.6 202.4L1207 202.4Z" fill="#8a8a8a" opacity="0.5" filter="url(#rb05)"/><path d="M1199 192.4H1205.6L1207 194.6L1209 195.4L1210.6 201.4L1212 207.0H1202L1200.6 201.4L1199.4 200.4Z" fill="#b8946a"/><path d="M1199 193.4H1197.8M1199 195.4H1197.8M1199.2 197.4H1198M1199.4 199.4H1198.2M1200.8 202.4H1199.6M1201.4 204.4H1200.2" stroke="#9a7850" stroke-width="1"/><path d="M1202 196.4H1207.6M1202.6 199.4H1209M1203.6 202.4H1210" stroke="#a4825a" stroke-width="0.9"/>
<path d="M1234 206.4L1243.6 206L1244.8 203L1240 203Z" fill="#8a8a8a" opacity="0.5" filter="url(#rb05)"/><rect x="1230.2" y="193.3" width="12.4" height="12.4" fill="url(#rggray)"/>
<rect x="1266" y="197" width="10.6" height="9" fill="#8488d0"/><g transform="translate(1261 193) scale(0.6 0.65)"><rect width="16" height="16" fill="#6e6434"/><rect width="16" height="7" fill="#a89c58"/><rect x="10.6" y="1" width="5.4" height="9" fill="#d6cc7c"/><rect x="0" y="1" width="4.6" height="7" fill="#b8ac64"/><path d="M3 16Q3 9 8 9Q13 9 13 16Z" fill="#2a2010"/><path d="M4.6 6Q4.6 1.6 8 1.6Q11.4 1.6 11.4 6L12 11L10.4 8Q8 5 5.6 8L4 11Z" fill="#1e1408"/><ellipse cx="8" cy="6.4" rx="2.5" ry="3.2" fill="#e8b878"/><ellipse cx="8" cy="13.6" rx="2.8" ry="1.3" fill="#dca868"/></g>
<path d="M1294.6 195.6L1296.0 203.8Q1299.8 206.0 1303.6 203.8L1305.0 195.6Z" fill="url(#rgbuck)"/><ellipse cx="1299.8" cy="195.6" rx="5.2" ry="2.2" fill="#c4daf8" stroke="#4a80d8" stroke-width="0.8"/><ellipse cx="1299.8" cy="195.8" rx="3" ry="1" fill="#eef4fc"/>
<rect x="1323" y="191.4" width="17.6" height="16.6" fill="#f4ecd6" stroke="#b6b6b6" stroke-width="1"/><path d="M1323.5 208.0V191.9H1340.6" fill="none" stroke="#a4a4a4" stroke-width="1"/><circle cx="1329" cy="199.0" r="4.3" fill="url(#rgbulb)"/><path d="M1326.8 202.2L1327.4 205.4H1330.6L1331.2 202.2Z" fill="#e0a010"/><rect x="1327.4" y="205.0" width="3.2" height="2.6" fill="#3a1a0a"/><rect x="1327.4" y="205.8" width="3.2" height="0.8" fill="#c02010"/><circle cx="1335" cy="197.0" r="4.3" fill="url(#rgbulb)"/><path d="M1332.8 200.2L1333.4 203.4H1336.6L1337.2 200.2Z" fill="#e0a010"/><rect x="1333.4" y="203.0" width="3.2" height="2.6" fill="#3a1a0a"/><rect x="1333.4" y="203.8" width="3.2" height="0.8" fill="#c02010"/>
<g transform="translate(1105.8 216.7) scale(1.0 1.0)"><rect width="16" height="16" fill="#6e6434"/><rect width="16" height="7" fill="#a89c58"/><rect x="10.6" y="1" width="5.4" height="9" fill="#d6cc7c"/><rect x="0" y="1" width="4.6" height="7" fill="#b8ac64"/><path d="M3 16Q3 9 8 9Q13 9 13 16Z" fill="#2a2010"/><path d="M4.6 6Q4.6 1.6 8 1.6Q11.4 1.6 11.4 6L12 11L10.4 8Q8 5 5.6 8L4 11Z" fill="#1e1408"/><ellipse cx="8" cy="6.4" rx="2.5" ry="3.2" fill="#e8b878"/><ellipse cx="8" cy="13.6" rx="2.8" ry="1.3" fill="#dca868"/></g>
<path d="M1108.4 314L1117.9 313.6L1118.9 310L1112.4 310Z" fill="#8a8a8a" opacity="0.5" filter="url(#rb05)"/><path d="M1104.4 299H1111.0L1116.0 304.4V313.8H1104.4Z" fill="url(#rgpage)"/><path d="M1111.0 299V304.4H1116.0Z" fill="#eef2fa"/>
<path d="M1134.2 311.6L1145.2 310L1146.2 307.6L1136.2 308Z" fill="#8a8a8a" opacity="0.45" filter="url(#rb05)"/><path d="M1130.8 302Q1130.8 300.4 1132.6000000000001 300.4L1136.2 300L1137.8 301.4L1141.2 301.6Q1142.2 302 1142.2 303.4L1144.8 305Q1145.8 305.6 1145.0 306.8L1142.8 310Q1142.2 310.8 1140.8 310.8L1132.2 311.2Q1131.0 311 1131.0 309.8Z" fill="url(#rgfold)"/><path d="M1131.0 309.8L1133.6000000000001 305.6Q1134.2 304.6 1135.8 304.6L1144.8 305Q1145.8 305.6 1145.0 306.8L1142.8 310Q1142.2 310.8 1140.8 310.8L1132.2 311.2Q1131.0 311 1131.0 309.8Z" fill="#f2d80c"/>
<path d="M1162 313L1172 312L1173 308.6L1166 309Z" fill="#8a8a8a" opacity="0.45" filter="url(#rb05)"/><rect x="1158" y="301" width="12.2" height="11.6" rx="1" fill="url(#rgsave)"/><rect x="1160.2" y="301.4" width="7.8" height="5.4" fill="url(#rglab)"/><rect x="1161" y="308.6" width="6.4" height="4" fill="#c9d2de"/><rect x="1162" y="309.4" width="2" height="2.8" fill="#2a55aa"/>
<path d="M1191 314.6L1201.6 314L1202.6 309L1195 309Z" fill="#8a8a8a" opacity="0.5" filter="url(#rb05)"/><path d="M1187 299H1193.6L1195 301.2L1197 302L1198.6 308L1200 313.6H1190L1188.6 308L1187.4 307Z" fill="#b8946a"/><path d="M1187 300H1185.8M1187 302H1185.8M1187.2 304H1186M1187.4 306H1186.2M1188.8 309H1187.6M1189.4 311H1188.2" stroke="#9a7850" stroke-width="1"/><path d="M1190 303H1195.6M1190.6 306H1197M1191.6 309H1198" stroke="#a4825a" stroke-width="0.9"/>
<path d="M1213.6 307.6L1221 303.8L1228.6 307.6L1221 313.8Z" fill="#a81414"/><path d="M1219.4 306H1222.6V309H1224.6L1221 312.4L1217.4 309H1219.4Z" fill="#f4a020"/><path d="M1213.2 303L1221 299L1229 303L1221 307.4Z" fill="#8a96e6" stroke="#6a78d0" stroke-width="0.5"/>
<path d="M1242.8 299H1249.8L1253.8 303V314.4H1242.8Z" fill="url(#rgpage2)"/><path d="M1249.8 299V303H1253.8Z" fill="#f4f6fa"/><circle cx="1248.3999999999999" cy="306.2" r="4.085" fill="url(#rgbulb)"/><path d="M1246.31 309.24L1246.8799999999999 312.28H1249.9199999999998L1250.4899999999998 309.24Z" fill="#e0a010"/><rect x="1246.8799999999999" y="311.9" width="3.04" height="2.4699999999999998" fill="#3a1a0a"/><rect x="1246.8799999999999" y="312.65999999999997" width="3.04" height="0.76" fill="#c02010"/>
<rect x="1270" y="300" width="14.4" height="13.8" fill="#050505"/><circle cx="1274.4" cy="302.6" r="1.4" fill="#9c9c9c"/><circle cx="1280" cy="302.6" r="1.4" fill="#9c9c9c"/><circle cx="1277.2" cy="304.4" r="2.6" fill="#b8b8b8"/><ellipse cx="1277.2" cy="309.2" rx="4" ry="3.8" fill="#a4a4a4"/><ellipse cx="1277.2" cy="310" rx="2" ry="2" fill="#7a7a7a"/><circle cx="1273.4" cy="312" r="1.2" fill="#c4c4c4"/><circle cx="1281" cy="312" r="1.2" fill="#c4c4c4"/><path d="M1281.4 302.6H1283.8M1282.6 302.6V305.4" stroke="#eee" stroke-width="0.8"/>
<path d="M1299 303.2L1300.4 311.4Q1304.2 313.6 1308 311.4L1309.4 303.2Z" fill="url(#rgbuck)"/><ellipse cx="1304.2" cy="303.2" rx="5.2" ry="2.2" fill="#c4daf8" stroke="#4a80d8" stroke-width="0.8"/><ellipse cx="1304.2" cy="303.4" rx="3" ry="1" fill="#eef4fc"/>
<rect x="1323" y="298.2" width="17.6" height="16.6" fill="#f4ecd6" stroke="#b6b6b6" stroke-width="1"/><path d="M1323.5 314.8V298.7H1340.6" fill="none" stroke="#a4a4a4" stroke-width="1"/><circle cx="1329" cy="305.8" r="4.3" fill="url(#rgbulb)"/><path d="M1326.8 309.0L1327.4 312.2H1330.6L1331.2 309.0Z" fill="#e0a010"/><rect x="1327.4" y="311.8" width="3.2" height="2.6" fill="#3a1a0a"/><rect x="1327.4" y="312.6" width="3.2" height="0.8" fill="#c02010"/><circle cx="1335" cy="303.8" r="4.3" fill="url(#rgbulb)"/><path d="M1332.8 307.0L1333.4 310.2H1336.6L1337.2 307.0Z" fill="#e0a010"/><rect x="1333.4" y="309.8" width="3.2" height="2.6" fill="#3a1a0a"/><rect x="1333.4" y="310.6" width="3.2" height="0.8" fill="#c02010"/>
<path d="M1114 333.6Q1113 326.6 1120 325Q1128 324 1131.4 331.4L1128.4 336Q1125.6 329.6 1120.4 330.4Q1117 331.6 1117.4 335Z" fill="#d8b24a"/><path d="M1114 333.6Q1113 326.6 1120 325Q1127 324.4 1130.6 329.8Q1125 326.6 1120 327.6Q1115.6 329 1114 333.6Z" fill="#f0dc9a"/><path d="M1117.4 335Q1117 331.6 1120.4 330.4Q1125.6 329.6 1128.4 336Q1122 337.6 1117.4 335Z" fill="#8a8ad8"/><path d="M1111.6 339H1118.4M1115 335.6V342.4" stroke="#111" stroke-width="1.1"/>
<path d="M1139 329.6V337.2L1143 333.4Z" fill="#111"/>
<rect x="1323.4" y="324" width="17" height="17.2" fill="#e2e2e2" stroke="#f6f6f6"/><path d="M1323.4 341.2V324H1340.4" fill="none" stroke="#9a9a9a"/><circle cx="1332" cy="331.4" r="4.515" fill="url(#rgbulb)"/><path d="M1329.69 334.76L1330.32 338.12H1333.68L1334.31 334.76Z" fill="#e0a010"/><rect x="1330.32" y="337.7" width="3.3600000000000003" height="2.7300000000000004" fill="#3a1a0a"/><rect x="1330.32" y="338.53999999999996" width="3.3600000000000003" height="0.8400000000000001" fill="#c02010"/>
<rect x="1311.8" y="349" width="12.4" height="12.2" rx="1.2" fill="url(#rgud)"/><path d="M1318.0 359V352.4M1314.8 355.4L1318.0 352L1321.2 355.4" fill="none" stroke="#fff" stroke-width="1.9"/><rect x="1329.3999999999999" y="349" width="12.4" height="12.2" rx="1.2" fill="url(#rgud)"/><path d="M1335.6 351.4V358M1332.3999999999999 355L1335.6 358.4L1338.8 355" fill="none" stroke="#fff" stroke-width="1.9"/>
</svg>
<div class="abs" style="left:1364px;top:43px;width:1px;height:678px;background:#b4b4b4"></div>
<svg class="abs" style="left:1095px;top:721px" width="271" height="26" viewBox="0 0 271 26"><rect width="271" height="26" filter="url(#nz)"/></svg>
<div class="abs" style="left:1095px;top:747px;width:271px;height:1px;background:#9a9a9a"></div>
<div class="abs" style="left:1144px;top:721px;width:48px;height:25px;background:#f0f0f0;border-radius:0 0 5px 5px;border:1px solid #bdbdbd;border-top:none"></div>
<div class="abs" style="left:1095px;top:720px;width:50px;height:27px;background:#f0f0f0;border-radius:0 0 6px 5px;border-right:1px solid #b4b4b4;border-bottom:1px solid #b4b4b4"></div><div class="abs" style="left:1145px;top:721px;width:221px;height:1px;background:#969696"></div>
<div class="tab" style="left:1102.6px;top:724.6px"><span class="sx" style="transform:scaleX(0.9)">Layers</span></div>
<div class="tab" style="left:1151px;top:725.7px"><span class="sx" style="transform:scaleX(0.93)">Add In</span></div>
<div class="sb" style="left:1023px;width:66px"><span class="sx" style="transform:scaleX(0.92)">X: -41.388</span></div>
<div class="sb" style="left:1092px;width:66px"><span class="sx" style="transform:scaleX(0.92)">Y: 798.286</span></div>
<div class="sb" style="left:1161px;width:60px"><span class="sx" style="transform:scaleX(0.92)">Z: 0.000</span></div>
<div class="sb" style="left:1224px;width:70px"></div>
<div class="sb" style="left:1297px;width:69px"></div>

</div>
</body></html>
